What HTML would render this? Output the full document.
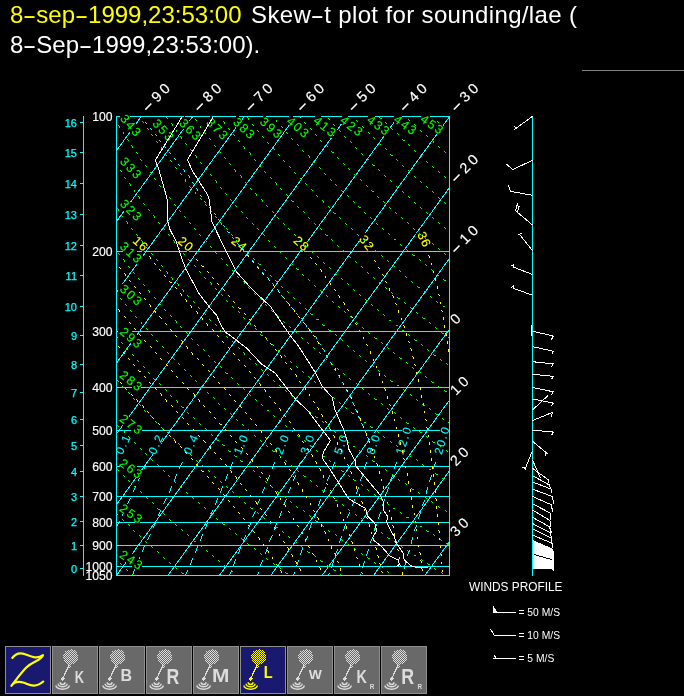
<!DOCTYPE html>
<html><head><meta charset="utf-8"><title>Skew-t plot</title>
<style>
html,body{margin:0;padding:0;background:#000;}
body{width:684px;height:696px;position:relative;overflow:hidden;font-family:"Liberation Sans",Arial,sans-serif;}
.t{will-change:transform;position:absolute;left:10px;white-space:nowrap;font-size:24px;line-height:30px;color:#fff;}
.t .y{color:#ffff00;}
.h{display:inline-block;width:13px;text-align:center;transform:scaleX(1.7);}
</style></head><body>
<div class="t" style="top:0px"><span class="y">8<span class="h">-</span>sep<span class="h">-</span>1999,23:53:00</span><span style="letter-spacing:0.36px;margin-left:2.5px"> Skew<span class="h">-</span>t plot for sounding/lae (</span></div>
<div class="t" style="top:30px">8<span class="h">-</span>Sep<span class="h">-</span>1999,23:53:00).</div>
<svg width="684" height="696" viewBox="0 0 684 696" style="position:absolute;left:0;top:0;will-change:transform" font-family="Liberation Sans, Arial, sans-serif" shape-rendering="crispEdges">
<defs><clipPath id="cb"><rect x="116.5" y="116.5" width="333.0" height="459.0"/></clipPath></defs>
<g clip-path="url(#cb)">
<line x1="116.5" y1="251.5" x2="449.5" y2="251.5" stroke="#00ffff" stroke-width="1" />
<line x1="116.5" y1="331.5" x2="449.5" y2="331.5" stroke="#00ffff" stroke-width="1" />
<line x1="116.5" y1="387.5" x2="449.5" y2="387.5" stroke="#00ffff" stroke-width="1" />
<line x1="116.5" y1="430.5" x2="449.5" y2="430.5" stroke="#00ffff" stroke-width="1" />
<line x1="116.5" y1="466.5" x2="449.5" y2="466.5" stroke="#00ffff" stroke-width="1" />
<line x1="116.5" y1="496.5" x2="449.5" y2="496.5" stroke="#00ffff" stroke-width="1" />
<line x1="116.5" y1="522.5" x2="449.5" y2="522.5" stroke="#00ffff" stroke-width="1" />
<line x1="116.5" y1="545.5" x2="449.5" y2="545.5" stroke="#00ffff" stroke-width="1" />
<line x1="116.5" y1="566.5" x2="449.5" y2="566.5" stroke="#00ffff" stroke-width="1" />
<line x1="-243.3" y1="575.5" x2="89.9" y2="116.5" stroke="#00ffff" stroke-width="1" />
<line x1="-191.9" y1="575.5" x2="141.3" y2="116.5" stroke="#00ffff" stroke-width="1" />
<line x1="-140.5" y1="575.5" x2="192.7" y2="116.5" stroke="#00ffff" stroke-width="1" />
<line x1="-89.1" y1="575.5" x2="244.1" y2="116.5" stroke="#00ffff" stroke-width="1" />
<line x1="-37.7" y1="575.5" x2="295.5" y2="116.5" stroke="#00ffff" stroke-width="1" />
<line x1="13.7" y1="575.5" x2="346.9" y2="116.5" stroke="#00ffff" stroke-width="1" />
<line x1="65.1" y1="575.5" x2="398.3" y2="116.5" stroke="#00ffff" stroke-width="1" />
<line x1="116.5" y1="575.5" x2="449.7" y2="116.5" stroke="#00ffff" stroke-width="1" />
<line x1="167.9" y1="575.5" x2="501.1" y2="116.5" stroke="#00ffff" stroke-width="1" />
<line x1="219.3" y1="575.5" x2="552.5" y2="116.5" stroke="#00ffff" stroke-width="1" />
<line x1="270.7" y1="575.5" x2="603.9" y2="116.5" stroke="#00ffff" stroke-width="1" />
<line x1="322.1" y1="575.5" x2="655.3" y2="116.5" stroke="#00ffff" stroke-width="1" />
<line x1="373.5" y1="575.5" x2="706.7" y2="116.5" stroke="#00ffff" stroke-width="1" />
<line x1="424.9" y1="575.5" x2="758.1" y2="116.5" stroke="#00ffff" stroke-width="1" />
<line x1="476.3" y1="575.5" x2="809.5" y2="116.5" stroke="#00ffff" stroke-width="1" />
<path fill="#00ffff" d="M146 462h1v1h-1zM182 462h1v1h-1zM232 462h1v1h-1zM274 462h1v1h-1zM300 462h1v1h-1zM334 462h1v1h-1zM366 462h1v1h-1zM396 462h1v1h-1zM435 462h1v1h-1zM146 463h1v1h-1zM181 463h1v1h-1zM232 463h1v1h-1zM274 463h1v1h-1zM299 463h1v1h-1zM334 463h1v1h-1zM366 463h1v1h-1zM396 463h1v1h-1zM435 463h1v1h-1zM145 464h1v1h-1zM181 464h1v1h-1zM231 464h1v1h-1zM273 464h1v1h-1zM299 464h1v1h-1zM333 464h1v1h-1zM365 464h1v1h-1zM395 464h1v1h-1zM434 464h1v1h-1zM145 465h1v1h-1zM180 465h1v1h-1zM231 465h1v1h-1zM273 465h1v1h-1zM298 465h1v1h-1zM333 465h1v1h-1zM365 465h1v1h-1zM395 465h1v1h-1zM434 465h1v1h-1zM145 466h1v1h-1zM180 466h1v1h-1zM231 466h1v1h-1zM273 466h1v1h-1zM298 466h1v1h-1zM333 466h1v1h-1zM365 466h1v1h-1zM395 466h1v1h-1zM434 466h1v1h-1zM144 467h1v1h-1zM179 467h1v1h-1zM230 467h1v1h-1zM272 467h1v1h-1zM297 467h1v1h-1zM332 467h1v1h-1zM364 467h1v1h-1zM394 467h1v1h-1zM433 467h1v1h-1zM144 468h1v1h-1zM179 468h1v1h-1zM230 468h1v1h-1zM272 468h1v1h-1zM297 468h1v1h-1zM332 468h1v1h-1zM364 468h1v1h-1zM394 468h1v1h-1zM433 468h1v1h-1zM141 474h1v1h-1zM176 474h1v1h-1zM227 474h1v1h-1zM140 475h1v1h-1zM176 475h1v1h-1zM227 475h1v1h-1zM269 475h1v1h-1zM295 475h1v1h-1zM329 475h1v1h-1zM362 475h1v1h-1zM392 475h1v1h-1zM431 475h1v1h-1zM140 476h1v1h-1zM175 476h1v1h-1zM226 476h1v1h-1zM269 476h1v1h-1zM295 476h1v1h-1zM329 476h1v1h-1zM362 476h1v1h-1zM392 476h1v1h-1zM431 476h1v1h-1zM139 477h1v1h-1zM175 477h1v1h-1zM226 477h1v1h-1zM268 477h1v1h-1zM294 477h1v1h-1zM328 477h1v1h-1zM361 477h1v1h-1zM391 477h1v1h-1zM430 477h1v1h-1zM139 478h1v1h-1zM175 478h1v1h-1zM226 478h1v1h-1zM268 478h1v1h-1zM294 478h1v1h-1zM328 478h1v1h-1zM361 478h1v1h-1zM391 478h1v1h-1zM430 478h1v1h-1zM138 479h1v1h-1zM174 479h1v1h-1zM225 479h1v1h-1zM267 479h1v1h-1zM293 479h1v1h-1zM327 479h1v1h-1zM360 479h1v1h-1zM390 479h1v1h-1zM430 479h1v1h-1zM138 480h1v1h-1zM174 480h1v1h-1zM225 480h1v1h-1zM267 480h1v1h-1zM293 480h1v1h-1zM327 480h1v1h-1zM360 480h1v1h-1zM390 480h1v1h-1zM429 480h1v1h-1zM429 481h1v1h-1zM135 486h1v1h-1zM171 486h1v1h-1zM222 486h1v1h-1zM135 487h1v1h-1zM171 487h1v1h-1zM222 487h1v1h-1zM264 487h1v1h-1zM290 487h1v1h-1zM325 487h1v1h-1zM358 487h1v1h-1zM388 487h1v1h-1zM427 487h1v1h-1zM134 488h1v1h-1zM170 488h1v1h-1zM221 488h1v1h-1zM264 488h1v1h-1zM290 488h1v1h-1zM325 488h1v1h-1zM358 488h1v1h-1zM388 488h1v1h-1zM427 488h1v1h-1zM134 489h1v1h-1zM170 489h1v1h-1zM221 489h1v1h-1zM263 489h1v1h-1zM289 489h1v1h-1zM324 489h1v1h-1zM357 489h1v1h-1zM387 489h1v1h-1zM427 489h1v1h-1zM133 490h1v1h-1zM170 490h1v1h-1zM221 490h1v1h-1zM263 490h1v1h-1zM289 490h1v1h-1zM324 490h1v1h-1zM357 490h1v1h-1zM387 490h1v1h-1zM426 490h1v1h-1zM133 491h1v1h-1zM169 491h1v1h-1zM220 491h1v1h-1zM262 491h1v1h-1zM288 491h1v1h-1zM323 491h1v1h-1zM357 491h1v1h-1zM387 491h1v1h-1zM426 491h1v1h-1zM169 492h1v1h-1zM220 492h1v1h-1zM262 492h1v1h-1zM288 492h1v1h-1zM323 492h1v1h-1zM356 492h1v1h-1zM386 492h1v1h-1zM426 492h1v1h-1zM356 493h1v1h-1zM386 493h1v1h-1zM426 493h1v1h-1zM130 498h1v1h-1zM166 498h1v1h-1zM217 498h1v1h-1zM129 499h1v1h-1zM165 499h1v1h-1zM217 499h1v1h-1zM259 499h1v1h-1zM286 499h1v1h-1zM320 499h1v1h-1zM354 499h1v1h-1zM384 499h1v1h-1zM129 500h1v1h-1zM165 500h1v1h-1zM216 500h1v1h-1zM259 500h1v1h-1zM285 500h1v1h-1zM320 500h1v1h-1zM354 500h1v1h-1zM384 500h1v1h-1zM424 500h1v1h-1zM128 501h1v1h-1zM164 501h1v1h-1zM216 501h1v1h-1zM258 501h1v1h-1zM285 501h1v1h-1zM319 501h1v1h-1zM353 501h1v1h-1zM383 501h1v1h-1zM424 501h1v1h-1zM128 502h1v1h-1zM164 502h1v1h-1zM216 502h1v1h-1zM258 502h1v1h-1zM284 502h1v1h-1zM319 502h1v1h-1zM353 502h1v1h-1zM383 502h1v1h-1zM423 502h1v1h-1zM127 503h1v1h-1zM163 503h1v1h-1zM215 503h1v1h-1zM257 503h1v1h-1zM284 503h1v1h-1zM319 503h1v1h-1zM353 503h1v1h-1zM383 503h1v1h-1zM423 503h1v1h-1zM215 504h1v1h-1zM257 504h1v1h-1zM283 504h1v1h-1zM318 504h1v1h-1zM352 504h1v1h-1zM382 504h1v1h-1zM422 504h1v1h-1zM318 505h1v1h-1zM352 505h1v1h-1zM382 505h1v1h-1zM422 505h1v1h-1zM124 510h1v1h-1zM160 510h1v1h-1zM212 510h1v1h-1zM124 511h1v1h-1zM160 511h1v1h-1zM212 511h1v1h-1zM255 511h1v1h-1zM281 511h1v1h-1zM316 511h1v1h-1zM123 512h1v1h-1zM159 512h1v1h-1zM211 512h1v1h-1zM254 512h1v1h-1zM281 512h1v1h-1zM316 512h1v1h-1zM349 512h1v1h-1zM380 512h1v1h-1zM420 512h1v1h-1zM123 513h1v1h-1zM159 513h1v1h-1zM211 513h1v1h-1zM254 513h1v1h-1zM280 513h1v1h-1zM315 513h1v1h-1zM349 513h1v1h-1zM380 513h1v1h-1zM420 513h1v1h-1zM122 514h1v1h-1zM158 514h1v1h-1zM211 514h1v1h-1zM253 514h1v1h-1zM280 514h1v1h-1zM315 514h1v1h-1zM348 514h1v1h-1zM379 514h1v1h-1zM419 514h1v1h-1zM122 515h1v1h-1zM158 515h1v1h-1zM210 515h1v1h-1zM253 515h1v1h-1zM280 515h1v1h-1zM315 515h1v1h-1zM348 515h1v1h-1zM379 515h1v1h-1zM419 515h1v1h-1zM210 516h1v1h-1zM252 516h1v1h-1zM279 516h1v1h-1zM314 516h1v1h-1zM347 516h1v1h-1zM379 516h1v1h-1zM419 516h1v1h-1zM279 517h1v1h-1zM314 517h1v1h-1zM347 517h1v1h-1zM378 517h1v1h-1zM418 517h1v1h-1zM378 518h1v1h-1zM418 518h1v1h-1zM119 521h1v1h-1zM118 522h1v1h-1zM155 522h1v1h-1zM207 522h1v1h-1zM118 523h1v1h-1zM155 523h1v1h-1zM207 523h1v1h-1zM250 523h1v1h-1zM276 523h1v1h-1zM311 523h1v1h-1zM117 524h1v1h-1zM154 524h1v1h-1zM206 524h1v1h-1zM250 524h1v1h-1zM276 524h1v1h-1zM311 524h1v1h-1zM345 524h1v1h-1zM376 524h1v1h-1zM117 525h1v1h-1zM154 525h1v1h-1zM206 525h1v1h-1zM249 525h1v1h-1zM275 525h1v1h-1zM310 525h1v1h-1zM345 525h1v1h-1zM376 525h1v1h-1zM416 525h1v1h-1zM153 526h1v1h-1zM206 526h1v1h-1zM249 526h1v1h-1zM275 526h1v1h-1zM310 526h1v1h-1zM344 526h1v1h-1zM375 526h1v1h-1zM416 526h1v1h-1zM153 527h1v1h-1zM205 527h1v1h-1zM248 527h1v1h-1zM275 527h1v1h-1zM310 527h1v1h-1zM344 527h1v1h-1zM375 527h1v1h-1zM415 527h1v1h-1zM205 528h1v1h-1zM248 528h1v1h-1zM274 528h1v1h-1zM309 528h1v1h-1zM344 528h1v1h-1zM375 528h1v1h-1zM415 528h1v1h-1zM274 529h1v1h-1zM309 529h1v1h-1zM343 529h1v1h-1zM374 529h1v1h-1zM414 529h1v1h-1zM343 530h1v1h-1zM374 530h1v1h-1zM414 530h1v1h-1zM150 534h1v1h-1zM202 534h1v1h-1zM149 535h1v1h-1zM202 535h1v1h-1zM245 535h1v1h-1zM272 535h1v1h-1zM149 536h1v1h-1zM201 536h1v1h-1zM245 536h1v1h-1zM271 536h1v1h-1zM307 536h1v1h-1zM341 536h1v1h-1zM148 537h1v1h-1zM201 537h1v1h-1zM244 537h1v1h-1zM271 537h1v1h-1zM307 537h1v1h-1zM341 537h1v1h-1zM372 537h1v1h-1zM412 537h1v1h-1zM148 538h1v1h-1zM201 538h1v1h-1zM244 538h1v1h-1zM270 538h1v1h-1zM306 538h1v1h-1zM340 538h1v1h-1zM372 538h1v1h-1zM412 538h1v1h-1zM147 539h1v1h-1zM200 539h1v1h-1zM243 539h1v1h-1zM270 539h1v1h-1zM306 539h1v1h-1zM340 539h1v1h-1zM371 539h1v1h-1zM412 539h1v1h-1zM200 540h1v1h-1zM243 540h1v1h-1zM269 540h1v1h-1zM305 540h1v1h-1zM340 540h1v1h-1zM371 540h1v1h-1zM411 540h1v1h-1zM269 541h1v1h-1zM305 541h1v1h-1zM339 541h1v1h-1zM370 541h1v1h-1zM411 541h1v1h-1zM339 542h1v1h-1zM370 542h1v1h-1zM411 542h1v1h-1zM411 543h1v1h-1zM144 545h1v1h-1zM144 546h1v1h-1zM197 546h1v1h-1zM143 547h1v1h-1zM197 547h1v1h-1zM240 547h1v1h-1zM267 547h1v1h-1zM143 548h1v1h-1zM196 548h1v1h-1zM240 548h1v1h-1zM267 548h1v1h-1zM302 548h1v1h-1zM143 549h1v1h-1zM196 549h1v1h-1zM239 549h1v1h-1zM266 549h1v1h-1zM302 549h1v1h-1zM337 549h1v1h-1zM368 549h1v1h-1zM142 550h1v1h-1zM196 550h1v1h-1zM239 550h1v1h-1zM266 550h1v1h-1zM301 550h1v1h-1zM337 550h1v1h-1zM368 550h1v1h-1zM409 550h1v1h-1zM142 551h1v1h-1zM195 551h1v1h-1zM239 551h1v1h-1zM266 551h1v1h-1zM301 551h1v1h-1zM336 551h1v1h-1zM367 551h1v1h-1zM409 551h1v1h-1zM195 552h1v1h-1zM238 552h1v1h-1zM265 552h1v1h-1zM301 552h1v1h-1zM336 552h1v1h-1zM367 552h1v1h-1zM408 552h1v1h-1zM238 553h1v1h-1zM265 553h1v1h-1zM300 553h1v1h-1zM335 553h1v1h-1zM367 553h1v1h-1zM408 553h1v1h-1zM300 554h1v1h-1zM335 554h1v1h-1zM366 554h1v1h-1zM407 554h1v1h-1zM366 555h1v1h-1zM407 555h1v1h-1zM139 557h1v1h-1zM139 558h1v1h-1zM192 558h1v1h-1zM138 559h1v1h-1zM192 559h1v1h-1zM235 559h1v1h-1zM138 560h1v1h-1zM191 560h1v1h-1zM235 560h1v1h-1zM262 560h1v1h-1zM298 560h1v1h-1zM138 561h1v1h-1zM191 561h1v1h-1zM234 561h1v1h-1zM262 561h1v1h-1zM298 561h1v1h-1zM333 561h1v1h-1zM364 561h1v1h-1zM137 562h1v1h-1zM191 562h1v1h-1zM234 562h1v1h-1zM261 562h1v1h-1zM297 562h1v1h-1zM333 562h1v1h-1zM364 562h1v1h-1zM405 562h1v1h-1zM137 563h1v1h-1zM190 563h1v1h-1zM234 563h1v1h-1zM261 563h1v1h-1zM297 563h1v1h-1zM332 563h1v1h-1zM363 563h1v1h-1zM405 563h1v1h-1zM190 564h1v1h-1zM233 564h1v1h-1zM260 564h1v1h-1zM297 564h1v1h-1zM332 564h1v1h-1zM363 564h1v1h-1zM405 564h1v1h-1zM233 565h1v1h-1zM260 565h1v1h-1zM296 565h1v1h-1zM332 565h1v1h-1zM363 565h1v1h-1zM404 565h1v1h-1zM296 566h1v1h-1zM331 566h1v1h-1zM362 566h1v1h-1zM404 566h1v1h-1zM331 567h1v1h-1zM362 567h1v1h-1zM404 567h1v1h-1zM404 568h1v1h-1zM134 569h1v1h-1zM134 570h1v1h-1zM187 570h1v1h-1zM133 571h1v1h-1zM187 571h1v1h-1zM231 571h1v1h-1zM133 572h1v1h-1zM186 572h1v1h-1zM230 572h1v1h-1zM258 572h1v1h-1zM294 572h1v1h-1zM133 573h1v1h-1zM186 573h1v1h-1zM230 573h1v1h-1zM258 573h1v1h-1zM294 573h1v1h-1zM329 573h1v1h-1zM132 574h1v1h-1zM185 574h1v1h-1zM229 574h1v1h-1zM257 574h1v1h-1zM293 574h1v1h-1zM328 574h1v1h-1zM360 574h1v1h-1z"/>
<g transform="translate(122.3 455.2) rotate(-64.3)"><rect x="-0.5" y="-8.9" width="21.2" height="9.4" fill="#000"/><text x="0.0" y="0.0" fill="#00ffff" stroke="#00ffff" stroke-width="0.12" font-size="11.6" letter-spacing="1.7" text-anchor="start">0.1</text></g>
<g transform="translate(155.3 455.2) rotate(-65.0)"><rect x="-0.5" y="-8.9" width="21.2" height="9.4" fill="#000"/><text x="0.0" y="0.0" fill="#00ffff" stroke="#00ffff" stroke-width="0.12" font-size="11.6" letter-spacing="1.7" text-anchor="start">0.2</text></g>
<g transform="translate(190.5 455.2) rotate(-65.9)"><rect x="-0.5" y="-8.9" width="21.2" height="9.4" fill="#000"/><text x="0.0" y="0.0" fill="#00ffff" stroke="#00ffff" stroke-width="0.12" font-size="11.6" letter-spacing="1.7" text-anchor="start">0.4</text></g>
<g transform="translate(240.8 455.2) rotate(-67.2)"><rect x="-0.5" y="-8.9" width="21.2" height="9.4" fill="#000"/><text x="0.0" y="0.0" fill="#00ffff" stroke="#00ffff" stroke-width="0.12" font-size="11.6" letter-spacing="1.7" text-anchor="start">1.0</text></g>
<g transform="translate(282.0 455.2) rotate(-68.4)"><rect x="-0.5" y="-8.9" width="21.2" height="9.4" fill="#000"/><text x="0.0" y="0.0" fill="#00ffff" stroke="#00ffff" stroke-width="0.12" font-size="11.6" letter-spacing="1.7" text-anchor="start">2.0</text></g>
<g transform="translate(307.5 455.2) rotate(-69.1)"><rect x="-0.5" y="-8.9" width="21.2" height="9.4" fill="#000"/><text x="0.0" y="0.0" fill="#00ffff" stroke="#00ffff" stroke-width="0.12" font-size="11.6" letter-spacing="1.7" text-anchor="start">3.0</text></g>
<g transform="translate(341.2 455.2) rotate(-70.1)"><rect x="-0.5" y="-8.9" width="21.2" height="9.4" fill="#000"/><text x="0.0" y="0.0" fill="#00ffff" stroke="#00ffff" stroke-width="0.12" font-size="11.6" letter-spacing="1.7" text-anchor="start">5.0</text></g>
<g transform="translate(373.7 455.2) rotate(-71.1)"><rect x="-0.5" y="-8.9" width="21.2" height="9.4" fill="#000"/><text x="0.0" y="0.0" fill="#00ffff" stroke="#00ffff" stroke-width="0.12" font-size="11.6" letter-spacing="1.7" text-anchor="start">8.0</text></g>
<g transform="translate(403.1 455.2) rotate(-72.1)"><rect x="-0.5" y="-8.9" width="29.4" height="9.4" fill="#000"/><text x="0.0" y="0.0" fill="#00ffff" stroke="#00ffff" stroke-width="0.12" font-size="11.6" letter-spacing="1.7" text-anchor="start">12.0</text></g>
<g transform="translate(441.7 455.2) rotate(-73.4)"><rect x="-0.5" y="-8.9" width="29.4" height="9.4" fill="#000"/><text x="0.0" y="0.0" fill="#00ffff" stroke="#00ffff" stroke-width="0.12" font-size="11.6" letter-spacing="1.7" text-anchor="start">20.0</text></g>
<path fill="#ffff00" d="M247 255h1v1h-1zM428 255h1v1h-1zM149 256h1v1h-1zM248 256h1v1h-1zM429 256h1v1h-1zM150 257h1v1h-1zM310 257h1v1h-1zM429 257h1v1h-1zM150 258h1v1h-1zM311 258h1v1h-1zM196 259h1v1h-1zM197 260h1v1h-1zM374 260h1v1h-1zM252 261h1v1h-1zM375 261h1v1h-1zM253 262h1v1h-1zM154 263h1v1h-1zM315 263h1v1h-1zM431 263h1v1h-1zM155 264h1v1h-1zM316 264h1v1h-1zM431 264h1v1h-1zM201 265h1v1h-1zM202 266h2v1h-2zM119 267h1v1h-1zM257 267h1v1h-1zM378 267h1v1h-1zM120 268h1v1h-1zM258 268h1v1h-1zM379 268h1v1h-1zM159 269h1v1h-1zM320 269h1v1h-1zM160 270h1v1h-1zM321 270h1v1h-1zM207 271h1v1h-1zM321 271h1v1h-1zM433 271h1v1h-1zM208 272h1v1h-1zM433 272h1v1h-1zM124 273h1v1h-1zM262 273h1v1h-1zM125 274h1v1h-1zM263 274h1v1h-1zM382 274h1v1h-1zM125 275h1v1h-1zM164 275h1v1h-1zM383 275h1v1h-1zM165 276h1v1h-1zM325 276h1v1h-1zM212 277h1v1h-1zM325 277h1v1h-1zM213 278h1v1h-1zM435 278h1v1h-1zM268 279h1v1h-1zM435 279h1v1h-1zM129 280h1v1h-1zM269 280h1v1h-1zM435 280h1v1h-1zM130 281h1v1h-1zM169 281h1v1h-1zM385 281h1v1h-1zM170 282h2v1h-2zM329 282h1v1h-1zM386 282h1v1h-1zM217 283h1v1h-1zM330 283h1v1h-1zM218 284h1v1h-1zM330 284h1v1h-1zM273 285h1v1h-1zM134 286h1v1h-1zM274 286h1v1h-1zM437 286h1v1h-1zM135 287h1v1h-1zM175 287h1v1h-1zM437 287h1v1h-1zM176 288h1v1h-1zM389 288h1v1h-1zM437 288h1v1h-1zM223 289h1v1h-1zM334 289h1v1h-1zM389 289h1v1h-1zM224 290h1v1h-1zM335 290h1v1h-1zM389 290h1v1h-1zM278 291h1v1h-1zM139 292h1v1h-1zM279 292h1v1h-1zM140 293h1v1h-1zM180 293h1v1h-1zM181 294h1v1h-1zM438 294h1v1h-1zM181 295h1v1h-1zM228 295h1v1h-1zM338 295h1v1h-1zM392 295h1v1h-1zM439 295h1v1h-1zM229 296h1v1h-1zM339 296h1v1h-1zM393 296h1v1h-1zM283 297h1v1h-1zM339 297h1v1h-1zM393 297h1v1h-1zM144 298h1v1h-1zM284 298h1v1h-1zM145 299h1v1h-1zM185 299h1v1h-1zM186 300h1v1h-1zM186 301h1v1h-1zM233 301h1v1h-1zM234 302h1v1h-1zM343 302h1v1h-1zM440 302h1v1h-1zM288 303h1v1h-1zM344 303h1v1h-1zM395 303h1v1h-1zM440 303h1v1h-1zM149 304h1v1h-1zM289 304h1v1h-1zM344 304h1v1h-1zM396 304h1v1h-1zM150 305h1v1h-1zM190 305h1v1h-1zM289 305h1v1h-1zM150 306h1v1h-1zM191 306h1v1h-1zM191 307h1v1h-1zM238 307h1v1h-1zM239 308h2v1h-2zM118 309h1v1h-1zM293 309h1v1h-1zM347 309h1v1h-1zM119 310h1v1h-1zM154 310h1v1h-1zM294 310h1v1h-1zM348 310h1v1h-1zM398 310h1v1h-1zM441 310h1v1h-1zM119 311h1v1h-1zM155 311h1v1h-1zM196 311h1v1h-1zM294 311h1v1h-1zM398 311h1v1h-1zM442 311h1v1h-1zM155 312h1v1h-1zM197 312h1v1h-1zM398 312h1v1h-1zM197 313h1v1h-1zM244 313h1v1h-1zM245 314h1v1h-1zM124 316h1v1h-1zM159 316h1v1h-1zM298 316h1v1h-1zM351 316h1v1h-1zM125 317h1v1h-1zM160 317h1v1h-1zM201 317h1v1h-1zM299 317h1v1h-1zM352 317h1v1h-1zM443 317h1v1h-1zM161 318h1v1h-1zM202 318h1v1h-1zM401 318h1v1h-1zM443 318h1v1h-1zM202 319h1v1h-1zM249 319h1v1h-1zM401 319h1v1h-1zM443 319h1v1h-1zM250 320h1v1h-1zM129 322h1v1h-1zM303 322h1v1h-1zM130 323h1v1h-1zM165 323h1v1h-1zM206 323h1v1h-1zM304 323h1v1h-1zM355 323h1v1h-1zM166 324h1v1h-1zM207 324h1v1h-1zM356 324h1v1h-1zM207 325h1v1h-1zM254 325h1v1h-1zM403 325h1v1h-1zM444 325h1v1h-1zM255 326h1v1h-1zM404 326h1v1h-1zM444 326h1v1h-1zM404 327h1v1h-1zM444 327h1v1h-1zM134 328h1v1h-1zM308 328h1v1h-1zM135 329h1v1h-1zM170 329h1v1h-1zM212 329h1v1h-1zM309 329h1v1h-1zM171 330h1v1h-1zM213 330h1v1h-1zM309 330h1v1h-1zM359 330h1v1h-1zM260 331h1v1h-1zM360 331h1v1h-1zM261 332h1v1h-1zM406 333h1v1h-1zM445 333h1v1h-1zM139 334h1v1h-1zM406 334h1v1h-1zM446 334h1v1h-1zM140 335h1v1h-1zM175 335h1v1h-1zM217 335h1v1h-1zM313 335h1v1h-1zM406 335h1v1h-1zM446 335h1v1h-1zM176 336h1v1h-1zM218 336h1v1h-1zM314 336h1v1h-1zM265 337h1v1h-1zM363 337h1v1h-1zM266 338h1v1h-1zM363 338h1v1h-1zM144 340h1v1h-1zM181 340h1v1h-1zM145 341h1v1h-1zM182 341h1v1h-1zM222 341h1v1h-1zM317 341h1v1h-1zM408 341h1v1h-1zM447 341h1v1h-1zM182 342h1v1h-1zM223 342h1v1h-1zM318 342h1v1h-1zM409 342h1v1h-1zM447 342h1v1h-1zM270 343h1v1h-1zM318 343h1v1h-1zM447 343h1v1h-1zM271 344h1v1h-1zM366 344h1v1h-1zM367 345h1v1h-1zM118 346h1v1h-1zM150 346h1v1h-1zM186 346h1v1h-1zM119 347h1v1h-1zM151 347h1v1h-1zM187 347h1v1h-1zM228 347h1v1h-1zM187 348h1v1h-1zM229 348h1v1h-1zM322 348h1v1h-1zM410 348h1v1h-1zM275 349h1v1h-1zM323 349h1v1h-1zM411 349h1v1h-1zM448 349h1v1h-1zM276 350h1v1h-1zM411 350h1v1h-1zM448 350h1v1h-1zM370 351h1v1h-1zM448 351h1v1h-1zM123 352h1v1h-1zM155 352h1v1h-1zM191 352h1v1h-1zM370 352h1v1h-1zM124 353h1v1h-1zM156 353h1v1h-1zM192 353h1v1h-1zM233 353h1v1h-1zM370 353h1v1h-1zM192 354h1v1h-1zM234 354h1v1h-1zM280 355h1v1h-1zM326 355h1v1h-1zM281 356h1v1h-1zM327 356h1v1h-1zM412 356h1v1h-1zM281 357h1v1h-1zM413 357h1v1h-1zM128 358h1v1h-1zM160 358h1v1h-1zM197 358h1v1h-1zM413 358h1v1h-1zM129 359h1v1h-1zM161 359h1v1h-1zM198 359h1v1h-1zM238 359h1v1h-1zM373 359h1v1h-1zM239 360h1v1h-1zM373 360h1v1h-1zM285 362h1v1h-1zM330 362h1v1h-1zM286 363h1v1h-1zM331 363h1v1h-1zM133 364h1v1h-1zM166 364h1v1h-1zM202 364h1v1h-1zM414 364h1v1h-1zM134 365h1v1h-1zM167 365h1v1h-1zM203 365h1v1h-1zM244 365h1v1h-1zM415 365h1v1h-1zM245 366h1v1h-1zM376 366h1v1h-1zM376 367h1v1h-1zM290 368h1v1h-1zM335 368h1v1h-1zM291 369h1v1h-1zM335 369h1v1h-1zM138 370h1v1h-1zM171 370h1v1h-1zM208 370h1v1h-1zM335 370h1v1h-1zM139 371h2v1h-2zM172 371h1v1h-1zM209 371h1v1h-1zM249 371h1v1h-1zM250 372h1v1h-1zM416 372h1v1h-1zM379 373h1v1h-1zM416 373h1v1h-1zM295 374h1v1h-1zM379 374h1v1h-1zM296 375h1v1h-1zM339 375h1v1h-1zM379 375h1v1h-1zM144 376h1v1h-1zM176 376h1v1h-1zM213 376h1v1h-1zM296 376h1v1h-1zM339 376h1v1h-1zM145 377h1v1h-1zM177 377h1v1h-1zM214 377h1v1h-1zM254 377h1v1h-1zM339 377h1v1h-1zM255 378h1v1h-1zM418 379h1v1h-1zM418 380h1v1h-1zM299 381h1v1h-1zM382 381h1v1h-1zM418 381h1v1h-1zM120 382h1v1h-1zM149 382h1v1h-1zM182 382h1v1h-1zM218 382h1v1h-1zM300 382h1v1h-1zM342 382h1v1h-1zM382 382h1v1h-1zM121 383h1v1h-1zM150 383h1v1h-1zM183 383h1v1h-1zM219 383h1v1h-1zM259 383h1v1h-1zM343 383h1v1h-1zM260 384h1v1h-1zM343 384h1v1h-1zM260 385h1v1h-1zM304 387h1v1h-1zM420 387h1v1h-1zM125 388h1v1h-1zM155 388h1v1h-1zM187 388h1v1h-1zM224 388h1v1h-1zM305 388h1v1h-1zM384 388h1v1h-1zM420 388h1v1h-1zM126 389h1v1h-1zM156 389h1v1h-1zM188 389h1v1h-1zM225 389h1v1h-1zM264 389h1v1h-1zM305 389h1v1h-1zM346 389h1v1h-1zM385 389h1v1h-1zM420 389h1v1h-1zM265 390h1v1h-1zM347 390h1v1h-1zM385 390h1v1h-1zM265 391h1v1h-1zM347 391h1v1h-1zM160 393h1v1h-1zM193 393h1v1h-1zM131 394h1v1h-1zM161 394h1v1h-1zM194 394h1v1h-1zM229 394h1v1h-1zM309 394h1v1h-1zM132 395h1v1h-1zM161 395h1v1h-1zM194 395h1v1h-1zM230 395h1v1h-1zM309 395h1v1h-1zM421 395h1v1h-1zM269 396h1v1h-1zM350 396h1v1h-1zM387 396h1v1h-1zM421 396h1v1h-1zM270 397h1v1h-1zM351 397h1v1h-1zM387 397h1v1h-1zM421 397h1v1h-1zM351 398h1v1h-1zM387 398h1v1h-1zM136 399h1v1h-1zM165 399h1v1h-1zM198 399h1v1h-1zM137 400h1v1h-1zM166 400h1v1h-1zM199 400h1v1h-1zM234 400h1v1h-1zM137 401h1v1h-1zM166 401h1v1h-1zM199 401h1v1h-1zM235 401h1v1h-1zM313 401h1v1h-1zM274 402h1v1h-1zM314 402h1v1h-1zM275 403h1v1h-1zM423 403h1v1h-1zM353 404h1v1h-1zM389 404h1v1h-1zM423 404h1v1h-1zM142 405h1v1h-1zM171 405h1v1h-1zM203 405h1v1h-1zM354 405h1v1h-1zM390 405h1v1h-1zM423 405h1v1h-1zM143 406h1v1h-1zM172 406h1v1h-1zM204 406h1v1h-1zM240 406h1v1h-1zM143 407h1v1h-1zM241 407h1v1h-1zM317 407h1v1h-1zM279 408h1v1h-1zM318 408h1v1h-1zM280 409h1v1h-1zM318 409h1v1h-1zM280 410h1v1h-1zM147 411h1v1h-1zM176 411h1v1h-1zM209 411h1v1h-1zM357 411h1v1h-1zM392 411h1v1h-1zM424 411h1v1h-1zM148 412h1v1h-1zM177 412h1v1h-1zM210 412h1v1h-1zM245 412h1v1h-1zM357 412h1v1h-1zM392 412h1v1h-1zM424 412h1v1h-1zM246 413h1v1h-1zM392 413h1v1h-1zM321 414h1v1h-1zM284 415h1v1h-1zM322 415h1v1h-1zM285 416h1v1h-1zM322 416h1v1h-1zM152 417h1v1h-1zM182 417h1v1h-1zM214 417h1v1h-1zM153 418h1v1h-1zM183 418h1v1h-1zM215 418h1v1h-1zM250 418h1v1h-1zM360 418h1v1h-1zM251 419h1v1h-1zM360 419h1v1h-1zM394 419h1v1h-1zM425 419h1v1h-1zM360 420h1v1h-1zM394 420h1v1h-1zM426 420h1v1h-1zM289 421h1v1h-1zM325 421h1v1h-1zM290 422h1v1h-1zM326 422h1v1h-1zM158 423h1v1h-1zM187 423h1v1h-1zM219 423h1v1h-1zM159 424h1v1h-1zM188 424h1v1h-1zM220 424h2v1h-2zM255 424h1v1h-1zM256 425h1v1h-1zM363 426h1v1h-1zM363 427h1v1h-1zM396 427h1v1h-1zM426 427h1v1h-1zM293 428h1v1h-1zM329 428h1v1h-1zM396 428h1v1h-1zM427 428h1v1h-1zM163 429h1v1h-1zM193 429h1v1h-1zM225 429h1v1h-1zM294 429h1v1h-1zM330 429h1v1h-1zM164 430h1v1h-1zM194 430h1v1h-1zM226 430h1v1h-1zM260 430h1v1h-1zM261 431h1v1h-1zM261 432h1v1h-1zM366 433h1v1h-1zM298 434h1v1h-1zM366 434h1v1h-1zM398 434h1v1h-1zM169 435h1v1h-1zM198 435h1v1h-1zM230 435h1v1h-1zM299 435h1v1h-1zM333 435h1v1h-1zM366 435h1v1h-1zM398 435h1v1h-1zM428 435h1v1h-1zM170 436h1v1h-1zM199 436h1v1h-1zM231 436h1v1h-1zM299 436h1v1h-1zM334 436h1v1h-1zM398 436h1v1h-1zM428 436h1v1h-1zM265 437h1v1h-1zM334 437h1v1h-1zM266 438h1v1h-1zM174 440h1v1h-1zM203 440h1v1h-1zM175 441h1v1h-1zM204 441h1v1h-1zM235 441h1v1h-1zM302 441h1v1h-1zM369 441h1v1h-1zM175 442h1v1h-1zM205 442h1v1h-1zM236 442h1v1h-1zM303 442h1v1h-1zM337 442h1v1h-1zM369 442h1v1h-1zM400 442h1v1h-1zM429 442h1v1h-1zM270 443h1v1h-1zM337 443h1v1h-1zM400 443h1v1h-1zM429 443h1v1h-1zM271 444h1v1h-1zM337 444h1v1h-1zM400 444h1v1h-1zM429 444h1v1h-1zM180 446h1v1h-1zM209 446h1v1h-1zM181 447h1v1h-1zM210 447h1v1h-1zM241 447h1v1h-1zM210 448h1v1h-1zM242 448h1v1h-1zM307 448h1v1h-1zM371 448h1v1h-1zM275 449h1v1h-1zM308 449h1v1h-1zM340 449h1v1h-1zM372 449h1v1h-1zM276 450h1v1h-1zM341 450h1v1h-1zM372 450h1v1h-1zM402 450h1v1h-1zM430 450h1v1h-1zM276 451h1v1h-1zM341 451h1v1h-1zM402 451h1v1h-1zM430 451h1v1h-1zM185 452h1v1h-1zM214 452h1v1h-1zM402 452h1v1h-1zM430 452h1v1h-1zM186 453h1v1h-1zM215 453h1v1h-1zM246 453h1v1h-1zM247 454h1v1h-1zM311 454h1v1h-1zM312 455h1v1h-1zM280 456h1v1h-1zM312 456h1v1h-1zM374 456h1v1h-1zM280 457h1v1h-1zM344 457h1v1h-1zM374 457h1v1h-1zM191 458h1v1h-1zM220 458h1v1h-1zM344 458h1v1h-1zM403 458h1v1h-1zM431 458h1v1h-1zM192 459h1v1h-1zM221 459h1v1h-1zM251 459h1v1h-1zM404 459h1v1h-1zM431 459h1v1h-1zM252 460h1v1h-1zM431 460h1v1h-1zM252 461h1v1h-1zM315 461h1v1h-1zM284 462h1v1h-1zM316 462h1v1h-1zM285 463h1v1h-1zM316 463h1v1h-1zM376 463h1v1h-1zM196 464h1v1h-1zM225 464h1v1h-1zM285 464h1v1h-1zM347 464h1v1h-1zM377 464h1v1h-1zM197 465h1v1h-1zM226 465h1v1h-1zM348 465h1v1h-1zM377 465h1v1h-1zM256 466h1v1h-1zM405 466h1v1h-1zM432 466h1v1h-1zM257 467h1v1h-1zM405 467h1v1h-1zM432 467h1v1h-1zM319 468h1v1h-1zM432 468h1v1h-1zM289 469h1v1h-1zM320 469h1v1h-1zM201 470h1v1h-1zM230 470h1v1h-1zM290 470h1v1h-1zM320 470h1v1h-1zM202 471h2v1h-2zM231 471h1v1h-1zM350 471h1v1h-1zM379 471h1v1h-1zM231 472h1v1h-1zM261 472h1v1h-1zM351 472h1v1h-1zM379 472h1v1h-1zM262 473h1v1h-1zM351 473h1v1h-1zM379 473h1v1h-1zM407 473h1v1h-1zM407 474h1v1h-1zM433 474h1v1h-1zM323 475h1v1h-1zM407 475h1v1h-1zM433 475h1v1h-1zM207 476h1v1h-1zM235 476h1v1h-1zM293 476h1v1h-1zM323 476h1v1h-1zM433 476h1v1h-1zM208 477h1v1h-1zM236 477h1v1h-1zM294 477h1v1h-1zM323 477h1v1h-1zM236 478h1v1h-1zM266 478h1v1h-1zM267 479h1v1h-1zM353 479h1v1h-1zM381 479h1v1h-1zM267 480h1v1h-1zM354 480h1v1h-1zM381 480h1v1h-1zM408 481h1v1h-1zM212 482h1v1h-1zM297 482h1v1h-1zM408 482h1v1h-1zM434 482h1v1h-1zM213 483h1v1h-1zM240 483h1v1h-1zM298 483h1v1h-1zM326 483h1v1h-1zM408 483h1v1h-1zM434 483h1v1h-1zM241 484h1v1h-1zM298 484h1v1h-1zM327 484h1v1h-1zM434 484h1v1h-1zM270 485h1v1h-1zM271 486h1v1h-1zM356 486h1v1h-1zM383 486h1v1h-1zM356 487h1v1h-1zM383 487h1v1h-1zM218 488h1v1h-1zM356 488h1v1h-1zM383 488h1v1h-1zM219 489h1v1h-1zM245 489h1v1h-1zM302 489h1v1h-1zM410 489h1v1h-1zM246 490h1v1h-1zM302 490h1v1h-1zM330 490h1v1h-1zM410 490h1v1h-1zM435 490h1v1h-1zM275 491h1v1h-1zM302 491h1v1h-1zM331 491h1v1h-1zM410 491h1v1h-1zM435 491h1v1h-1zM276 492h1v1h-1zM435 492h1v1h-1zM276 493h1v1h-1zM223 494h1v1h-1zM359 494h1v1h-1zM385 494h1v1h-1zM224 495h1v1h-1zM250 495h1v1h-1zM359 495h1v1h-1zM385 495h1v1h-1zM251 496h1v1h-1zM306 496h1v1h-1zM385 496h1v1h-1zM306 497h1v1h-1zM333 497h1v1h-1zM411 497h1v1h-1zM280 498h1v1h-1zM334 498h1v1h-1zM411 498h1v1h-1zM435 498h1v1h-1zM280 499h1v1h-1zM411 499h1v1h-1zM436 499h1v1h-1zM228 500h1v1h-1zM436 500h1v1h-1zM229 501h1v1h-1zM255 501h1v1h-1zM361 501h1v1h-1zM256 502h1v1h-1zM362 502h1v1h-1zM387 502h1v1h-1zM256 503h1v1h-1zM310 503h1v1h-1zM362 503h1v1h-1zM387 503h1v1h-1zM284 504h1v1h-1zM310 504h1v1h-1zM337 504h1v1h-1zM285 505h1v1h-1zM337 505h1v1h-1zM412 505h1v1h-1zM233 506h1v1h-1zM285 506h1v1h-1zM337 506h1v1h-1zM412 506h1v1h-1zM436 506h1v1h-1zM234 507h1v1h-1zM412 507h1v1h-1zM436 507h1v1h-1zM260 508h1v1h-1zM436 508h1v1h-1zM261 509h1v1h-1zM364 509h1v1h-1zM313 510h1v1h-1zM364 510h1v1h-1zM389 510h1v1h-1zM288 511h1v1h-1zM314 511h1v1h-1zM389 511h1v1h-1zM238 512h1v1h-1zM289 512h1v1h-1zM340 512h1v1h-1zM239 513h1v1h-1zM340 513h1v1h-1zM414 513h1v1h-1zM265 514h1v1h-1zM414 514h1v1h-1zM437 514h1v1h-1zM266 515h1v1h-1zM437 515h1v1h-1zM437 516h1v1h-1zM317 517h1v1h-1zM366 517h1v1h-1zM391 517h1v1h-1zM243 518h1v1h-1zM293 518h1v1h-1zM318 518h1v1h-1zM367 518h1v1h-1zM391 518h1v1h-1zM244 519h1v1h-1zM293 519h1v1h-1zM318 519h1v1h-1zM343 519h1v1h-1zM391 519h1v1h-1zM343 520h1v1h-1zM270 521h1v1h-1zM415 521h1v1h-1zM271 522h1v1h-1zM415 522h1v1h-1zM438 522h1v1h-1zM438 523h1v1h-1zM321 524h1v1h-1zM369 524h1v1h-1zM438 524h1v1h-1zM248 525h1v1h-1zM297 525h1v1h-1zM321 525h1v1h-1zM369 525h1v1h-1zM392 525h1v1h-1zM249 526h1v1h-1zM298 526h1v1h-1zM321 526h1v1h-1zM346 526h1v1h-1zM369 526h1v1h-1zM393 526h1v1h-1zM274 527h1v1h-1zM346 527h1v1h-1zM393 527h1v1h-1zM275 528h1v1h-1zM346 528h1v1h-1zM416 529h1v1h-1zM416 530h1v1h-1zM438 530h1v1h-1zM253 531h1v1h-1zM324 531h1v1h-1zM439 531h1v1h-1zM254 532h1v1h-1zM301 532h1v1h-1zM325 532h1v1h-1zM371 532h1v1h-1zM439 532h1v1h-1zM302 533h1v1h-1zM325 533h1v1h-1zM371 533h1v1h-1zM394 533h1v1h-1zM279 534h1v1h-1zM349 534h1v1h-1zM394 534h1v1h-1zM279 535h1v1h-1zM349 535h1v1h-1zM394 535h1v1h-1zM258 537h1v1h-1zM417 537h1v1h-1zM259 538h1v1h-1zM417 538h1v1h-1zM439 538h1v1h-1zM259 539h1v1h-1zM305 539h1v1h-1zM328 539h1v1h-1zM439 539h1v1h-1zM305 540h1v1h-1zM328 540h1v1h-1zM373 540h1v1h-1zM283 541h1v1h-1zM351 541h1v1h-1zM374 541h1v1h-1zM396 541h1v1h-1zM284 542h1v1h-1zM352 542h1v1h-1zM396 542h1v1h-1zM352 543h1v1h-1zM396 543h1v1h-1zM263 544h1v1h-1zM263 545h1v1h-1zM418 545h1v1h-1zM308 546h1v1h-1zM331 546h1v1h-1zM418 546h1v1h-1zM440 546h1v1h-1zM287 547h1v1h-1zM309 547h1v1h-1zM331 547h1v1h-1zM375 547h1v1h-1zM440 547h1v1h-1zM288 548h1v1h-1zM331 548h1v1h-1zM376 548h1v1h-1zM288 549h1v1h-1zM354 549h1v1h-1zM376 549h1v1h-1zM397 549h1v1h-1zM267 550h1v1h-1zM354 550h1v1h-1zM398 550h1v1h-1zM268 551h1v1h-1zM268 552h1v1h-1zM419 552h1v1h-1zM312 553h1v1h-1zM334 553h1v1h-1zM420 553h1v1h-1zM291 554h1v1h-1zM313 554h1v1h-1zM335 554h1v1h-1zM420 554h1v1h-1zM441 554h1v1h-1zM292 555h1v1h-1zM335 555h1v1h-1zM377 555h1v1h-1zM441 555h1v1h-1zM292 556h1v1h-1zM378 556h1v1h-1zM272 557h1v1h-1zM356 557h1v1h-1zM378 557h1v1h-1zM399 557h1v1h-1zM272 558h1v1h-1zM357 558h1v1h-1zM399 558h1v1h-1zM316 560h1v1h-1zM420 560h1v1h-1zM295 561h1v1h-1zM316 561h1v1h-1zM337 561h1v1h-1zM421 561h1v1h-1zM296 562h1v1h-1zM338 562h1v1h-1zM421 562h1v1h-1zM441 562h1v1h-1zM296 563h1v1h-1zM379 563h1v1h-1zM441 563h1v1h-1zM276 564h1v1h-1zM359 564h1v1h-1zM380 564h1v1h-1zM277 565h1v1h-1zM359 565h1v1h-1zM400 565h1v1h-1zM359 566h1v1h-1zM401 566h1v1h-1zM319 567h1v1h-1zM299 568h1v1h-1zM320 568h1v1h-1zM340 568h1v1h-1zM421 568h1v1h-1zM300 569h1v1h-1zM320 569h1v1h-1zM340 569h1v1h-1zM422 569h1v1h-1zM280 570h1v1h-1zM300 570h1v1h-1zM340 570h1v1h-1zM422 570h1v1h-1zM442 570h1v1h-1zM281 571h1v1h-1zM381 571h1v1h-1zM442 571h1v1h-1zM281 572h1v1h-1zM361 572h1v1h-1zM382 572h1v1h-1zM402 572h1v1h-1zM362 573h1v1h-1zM402 573h1v1h-1zM402 574h1v1h-1z"/>
<g transform="translate(140.6 243.5) rotate(41.8)"><rect x="-8.7" y="-5.0" width="16.3" height="10.0" fill="#000"/><text x="0.6" y="4.5" fill="#ffff00" stroke="#ffff00" stroke-width="0.12" font-size="12.5" letter-spacing="1.2" text-anchor="middle">16</text></g>
<g transform="translate(185.6 243.7) rotate(40.3)"><rect x="-8.7" y="-5.0" width="16.3" height="10.0" fill="#000"/><text x="0.6" y="4.5" fill="#ffff00" stroke="#ffff00" stroke-width="0.12" font-size="12.5" letter-spacing="1.2" text-anchor="middle">20</text></g>
<g transform="translate(239.2 243.7) rotate(40.0)"><rect x="-8.7" y="-5.0" width="16.3" height="10.0" fill="#000"/><text x="0.6" y="4.5" fill="#ffff00" stroke="#ffff00" stroke-width="0.12" font-size="12.5" letter-spacing="1.2" text-anchor="middle">24</text></g>
<g transform="translate(301.4 243.3) rotate(43.1)"><rect x="-8.7" y="-5.0" width="16.3" height="10.0" fill="#000"/><text x="0.6" y="4.5" fill="#ffff00" stroke="#ffff00" stroke-width="0.12" font-size="12.5" letter-spacing="1.2" text-anchor="middle">28</text></g>
<g transform="translate(366.8 242.4) rotate(52.3)"><rect x="-8.7" y="-5.0" width="16.3" height="10.0" fill="#000"/><text x="0.6" y="4.5" fill="#ffff00" stroke="#ffff00" stroke-width="0.12" font-size="12.5" letter-spacing="1.2" text-anchor="middle">32</text></g>
<g transform="translate(424.3 239.1) rotate(65.0)"><rect x="-8.7" y="-5.0" width="16.3" height="10.0" fill="#000"/><text x="0.6" y="4.5" fill="#ffff00" stroke="#ffff00" stroke-width="0.12" font-size="12.5" letter-spacing="1.2" text-anchor="middle">36</text></g>
<path fill="#00ff00" d="M166 117h1v1h-1zM247 117h1v1h-1zM300 117h1v1h-1zM379 117h1v1h-1zM167 118h1v1h-1zM248 118h1v1h-1zM328 118h1v1h-1zM380 118h2v1h-2zM195 119h1v1h-1zM248 119h1v1h-1zM329 119h1v1h-1zM408 119h1v1h-1zM196 120h1v1h-1zM276 120h1v1h-1zM356 120h1v1h-1zM409 120h1v1h-1zM142 121h1v1h-1zM223 121h1v1h-1zM276 121h1v1h-1zM357 121h1v1h-1zM437 121h1v1h-1zM143 122h1v1h-1zM224 122h1v1h-1zM304 122h1v1h-1zM385 122h1v1h-1zM438 122h1v1h-1zM171 123h1v1h-1zM224 123h1v1h-1zM305 123h1v1h-1zM386 123h1v1h-1zM172 124h1v1h-1zM252 124h1v1h-1zM333 124h1v1h-1zM414 124h1v1h-1zM118 125h1v1h-1zM172 125h1v1h-1zM253 125h1v1h-1zM334 125h1v1h-1zM415 125h1v1h-1zM119 126h1v1h-1zM200 126h1v1h-1zM281 126h1v1h-1zM362 126h1v1h-1zM443 126h1v1h-1zM119 127h1v1h-1zM200 127h1v1h-1zM282 127h1v1h-1zM363 127h1v1h-1zM444 127h1v1h-1zM147 128h1v1h-1zM228 128h1v1h-1zM310 128h1v1h-1zM391 128h1v1h-1zM148 129h1v1h-1zM229 129h1v1h-1zM311 129h1v1h-1zM392 129h1v1h-1zM176 130h1v1h-1zM257 130h1v1h-1zM339 130h1v1h-1zM420 130h1v1h-1zM176 131h1v1h-1zM258 131h1v1h-1zM340 131h1v1h-1zM421 131h1v1h-1zM123 132h1v1h-1zM204 132h1v1h-1zM286 132h1v1h-1zM368 132h1v1h-1zM123 133h1v1h-1zM205 133h1v1h-1zM287 133h1v1h-1zM369 133h1v1h-1zM397 133h1v1h-1zM151 134h1v1h-1zM233 134h1v1h-1zM315 134h1v1h-1zM398 134h1v1h-1zM152 135h1v1h-1zM234 135h1v1h-1zM316 135h1v1h-1zM426 135h1v1h-1zM180 136h1v1h-1zM262 136h1v1h-1zM344 136h1v1h-1zM427 136h1v1h-1zM181 137h1v1h-1zM263 137h1v1h-1zM345 137h1v1h-1zM373 137h1v1h-1zM181 138h1v1h-1zM209 138h1v1h-1zM291 138h1v1h-1zM374 138h1v1h-1zM127 139h1v1h-1zM210 139h1v1h-1zM292 139h1v1h-1zM402 139h1v1h-1zM128 140h1v1h-1zM238 140h1v1h-1zM320 140h1v1h-1zM403 140h2v1h-2zM432 140h1v1h-1zM156 141h1v1h-1zM239 141h1v1h-1zM321 141h1v1h-1zM350 141h1v1h-1zM433 141h1v1h-1zM157 142h1v1h-1zM267 142h1v1h-1zM351 142h1v1h-1zM433 142h1v1h-1zM185 143h1v1h-1zM268 143h1v1h-1zM379 143h1v1h-1zM186 144h1v1h-1zM297 144h1v1h-1zM380 144h1v1h-1zM408 144h1v1h-1zM131 145h1v1h-1zM214 145h1v1h-1zM298 145h1v1h-1zM326 145h1v1h-1zM409 145h1v1h-1zM132 146h1v1h-1zM215 146h1v1h-1zM243 146h1v1h-1zM327 146h1v1h-1zM438 146h1v1h-1zM132 147h1v1h-1zM161 147h1v1h-1zM244 147h1v1h-1zM355 147h1v1h-1zM439 147h1v1h-1zM161 148h1v1h-1zM244 148h1v1h-1zM273 148h1v1h-1zM356 148h1v1h-1zM385 148h1v1h-1zM161 149h1v1h-1zM190 149h1v1h-1zM274 149h1v1h-1zM386 149h1v1h-1zM191 150h1v1h-1zM302 150h1v1h-1zM414 150h1v1h-1zM219 151h1v1h-1zM303 151h1v1h-1zM331 151h1v1h-1zM415 151h1v1h-1zM444 151h1v1h-1zM136 152h1v1h-1zM220 152h1v1h-1zM249 152h1v1h-1zM332 152h2v1h-2zM445 152h1v1h-1zM137 153h1v1h-1zM250 153h1v1h-1zM361 153h1v1h-1zM165 154h1v1h-1zM250 154h1v1h-1zM278 154h1v1h-1zM362 154h1v1h-1zM390 154h1v1h-1zM166 155h1v1h-1zM195 155h1v1h-1zM279 155h1v1h-1zM308 155h1v1h-1zM391 155h2v1h-2zM420 155h1v1h-1zM196 156h1v1h-1zM309 156h1v1h-1zM421 156h1v1h-1zM196 157h1v1h-1zM224 157h1v1h-1zM309 157h1v1h-1zM337 157h1v1h-1zM225 158h1v1h-1zM338 158h1v1h-1zM367 158h1v1h-1zM140 159h1v1h-1zM254 159h1v1h-1zM368 159h1v1h-1zM396 159h1v1h-1zM141 160h1v1h-1zM170 160h1v1h-1zM255 160h1v1h-1zM283 160h1v1h-1zM397 160h1v1h-1zM171 161h1v1h-1zM284 161h1v1h-1zM313 161h1v1h-1zM426 161h1v1h-1zM200 162h1v1h-1zM314 162h1v1h-1zM427 162h1v1h-1zM201 163h1v1h-1zM229 163h1v1h-1zM343 163h1v1h-1zM230 164h1v1h-1zM344 164h1v1h-1zM372 164h1v1h-1zM145 165h1v1h-1zM259 165h1v1h-1zM373 165h2v1h-2zM402 165h1v1h-1zM146 166h1v1h-1zM260 166h1v1h-1zM289 166h1v1h-1zM403 166h1v1h-1zM432 166h1v1h-1zM175 167h1v1h-1zM290 167h1v1h-1zM319 167h1v1h-1zM433 167h1v1h-1zM176 168h1v1h-1zM205 168h1v1h-1zM320 168h1v1h-1zM348 168h1v1h-1zM206 169h1v1h-1zM234 169h1v1h-1zM349 169h1v1h-1zM378 169h1v1h-1zM120 170h1v1h-1zM235 170h1v1h-1zM379 170h1v1h-1zM408 170h1v1h-1zM121 171h1v1h-1zM235 171h1v1h-1zM264 171h1v1h-1zM409 171h1v1h-1zM438 171h1v1h-1zM150 172h1v1h-1zM265 172h1v1h-1zM294 172h1v1h-1zM439 172h1v1h-1zM151 173h1v1h-1zM180 173h1v1h-1zM295 173h1v1h-1zM324 173h1v1h-1zM181 174h1v1h-1zM210 174h1v1h-1zM325 174h1v1h-1zM354 174h1v1h-1zM211 175h1v1h-1zM240 175h1v1h-1zM355 175h1v1h-1zM384 175h1v1h-1zM241 176h1v1h-1zM385 176h1v1h-1zM414 176h1v1h-1zM444 176h1v1h-1zM124 177h1v1h-1zM241 177h1v1h-1zM270 177h1v1h-1zM415 177h1v1h-1zM445 177h1v1h-1zM125 178h1v1h-1zM154 178h1v1h-1zM271 178h1v1h-1zM300 178h1v1h-1zM155 179h1v1h-1zM185 179h1v1h-1zM301 179h1v1h-1zM330 179h1v1h-1zM360 179h1v1h-1zM185 180h1v1h-1zM215 180h1v1h-1zM331 180h1v1h-1zM361 180h1v1h-1zM390 180h1v1h-1zM185 181h1v1h-1zM216 181h1v1h-1zM391 181h1v1h-1zM420 181h1v1h-1zM216 182h1v1h-1zM245 182h1v1h-1zM275 182h1v1h-1zM421 182h1v1h-1zM129 183h1v1h-1zM246 183h1v1h-1zM276 183h1v1h-1zM305 183h1v1h-1zM130 184h1v1h-1zM276 184h1v1h-1zM306 184h1v1h-1zM335 184h1v1h-1zM130 185h1v1h-1zM159 185h1v1h-1zM336 185h1v1h-1zM366 185h1v1h-1zM160 186h1v1h-1zM189 186h1v1h-1zM367 186h1v1h-1zM396 186h1v1h-1zM426 186h1v1h-1zM190 187h1v1h-1zM220 187h1v1h-1zM397 187h1v1h-1zM427 187h1v1h-1zM221 188h1v1h-1zM250 188h1v1h-1zM280 188h1v1h-1zM251 189h1v1h-1zM281 189h1v1h-1zM311 189h1v1h-1zM134 190h1v1h-1zM312 190h1v1h-1zM341 190h1v1h-1zM371 190h1v1h-1zM134 191h1v1h-1zM164 191h1v1h-1zM342 191h1v1h-1zM372 191h2v1h-2zM402 191h1v1h-1zM432 191h1v1h-1zM165 192h1v1h-1zM195 192h1v1h-1zM403 192h1v1h-1zM433 192h1v1h-1zM195 193h1v1h-1zM225 193h1v1h-1zM255 193h1v1h-1zM226 194h1v1h-1zM256 194h1v1h-1zM286 194h1v1h-1zM256 195h1v1h-1zM287 195h1v1h-1zM316 195h1v1h-1zM347 195h1v1h-1zM138 196h1v1h-1zM317 196h1v1h-1zM348 196h1v1h-1zM377 196h1v1h-1zM408 196h1v1h-1zM139 197h1v1h-1zM169 197h1v1h-1zM378 197h1v1h-1zM409 197h1v1h-1zM438 197h1v1h-1zM139 198h1v1h-1zM170 198h1v1h-1zM200 198h1v1h-1zM439 198h1v1h-1zM201 199h1v1h-1zM230 199h1v1h-1zM261 199h1v1h-1zM231 200h1v1h-1zM262 200h1v1h-1zM291 200h1v1h-1zM322 200h1v1h-1zM262 201h1v1h-1zM292 201h2v1h-2zM323 201h1v1h-1zM353 201h1v1h-1zM383 201h1v1h-1zM323 202h1v1h-1zM354 202h1v1h-1zM384 202h1v1h-1zM414 202h1v1h-1zM444 202h1v1h-1zM143 203h1v1h-1zM415 203h1v1h-1zM445 203h1v1h-1zM144 204h1v1h-1zM174 204h1v1h-1zM205 204h1v1h-1zM175 205h1v1h-1zM206 205h1v1h-1zM235 205h1v1h-1zM266 205h1v1h-1zM236 206h1v1h-1zM267 206h1v1h-1zM297 206h1v1h-1zM328 206h1v1h-1zM358 206h1v1h-1zM298 207h1v1h-1zM329 207h1v1h-1zM359 207h2v1h-2zM389 207h1v1h-1zM420 207h1v1h-1zM117 208h1v1h-1zM390 208h1v1h-1zM421 208h1v1h-1zM118 209h1v1h-1zM148 209h1v1h-1zM118 210h1v1h-1zM149 210h1v1h-1zM179 210h1v1h-1zM210 210h1v1h-1zM180 211h1v1h-1zM211 211h1v1h-1zM241 211h1v1h-1zM272 211h1v1h-1zM303 211h1v1h-1zM242 212h1v1h-1zM273 212h1v1h-1zM304 212h1v1h-1zM333 212h1v1h-1zM364 212h1v1h-1zM395 212h1v1h-1zM426 212h1v1h-1zM334 213h2v1h-2zM365 213h1v1h-1zM396 213h1v1h-1zM427 213h1v1h-1zM121 215h1v1h-1zM153 215h1v1h-1zM122 216h1v1h-1zM154 216h1v1h-1zM184 216h1v1h-1zM215 216h1v1h-1zM154 217h1v1h-1zM185 217h1v1h-1zM216 217h1v1h-1zM246 217h1v1h-1zM277 217h1v1h-1zM308 217h1v1h-1zM339 217h1v1h-1zM370 217h1v1h-1zM401 217h1v1h-1zM432 217h1v1h-1zM247 218h1v1h-1zM278 218h1v1h-1zM309 218h1v1h-1zM340 218h1v1h-1zM371 218h1v1h-1zM402 218h1v1h-1zM433 218h1v1h-1zM126 221h1v1h-1zM127 222h1v1h-1zM158 222h1v1h-1zM189 222h1v1h-1zM220 222h1v1h-1zM407 222h1v1h-1zM438 222h1v1h-1zM127 223h1v1h-1zM159 223h1v1h-1zM190 223h1v1h-1zM221 223h1v1h-1zM252 223h1v1h-1zM283 223h1v1h-1zM314 223h1v1h-1zM345 223h1v1h-1zM376 223h1v1h-1zM408 223h1v1h-1zM439 223h1v1h-1zM221 224h1v1h-1zM253 224h1v1h-1zM284 224h1v1h-1zM315 224h1v1h-1zM346 224h1v1h-1zM377 224h1v1h-1zM444 227h1v1h-1zM131 228h1v1h-1zM163 228h1v1h-1zM194 228h1v1h-1zM226 228h1v1h-1zM257 228h1v1h-1zM288 228h1v1h-1zM320 228h1v1h-1zM351 228h1v1h-1zM382 228h1v1h-1zM413 228h1v1h-1zM445 228h1v1h-1zM132 229h1v1h-1zM164 229h1v1h-1zM195 229h1v1h-1zM227 229h1v1h-1zM258 229h1v1h-1zM289 229h1v1h-1zM321 229h1v1h-1zM352 229h1v1h-1zM383 229h1v1h-1zM414 229h1v1h-1zM388 233h1v1h-1zM419 233h1v1h-1zM136 234h1v1h-1zM168 234h1v1h-1zM199 234h1v1h-1zM231 234h1v1h-1zM263 234h1v1h-1zM294 234h1v1h-1zM325 234h1v1h-1zM357 234h1v1h-1zM389 234h1v1h-1zM420 234h1v1h-1zM137 235h1v1h-1zM169 235h1v1h-1zM200 235h1v1h-1zM232 235h1v1h-1zM264 235h1v1h-1zM295 235h1v1h-1zM326 235h2v1h-2zM358 235h1v1h-1zM425 238h1v1h-1zM331 239h1v1h-1zM363 239h1v1h-1zM394 239h2v1h-2zM426 239h2v1h-2zM141 240h1v1h-1zM173 240h1v1h-1zM205 240h1v1h-1zM236 240h1v1h-1zM268 240h1v1h-1zM300 240h1v1h-1zM332 240h1v1h-1zM364 240h1v1h-1zM142 241h1v1h-1zM174 241h1v1h-1zM206 241h1v1h-1zM237 241h1v1h-1zM269 241h1v1h-1zM301 241h1v1h-1zM142 242h1v1h-1zM174 242h1v1h-1zM432 243h1v1h-1zM369 244h1v1h-1zM400 244h1v1h-1zM433 244h1v1h-1zM305 245h1v1h-1zM337 245h1v1h-1zM370 245h1v1h-1zM401 245h1v1h-1zM210 246h1v1h-1zM242 246h1v1h-1zM274 246h1v1h-1zM306 246h2v1h-2zM338 246h1v1h-1zM146 247h1v1h-1zM178 247h1v1h-1zM211 247h1v1h-1zM243 247h1v1h-1zM275 247h1v1h-1zM147 248h1v1h-1zM179 248h1v1h-1zM438 248h1v1h-1zM406 249h1v1h-1zM439 249h1v1h-1zM343 250h1v1h-1zM375 250h1v1h-1zM407 250h1v1h-1zM279 251h1v1h-1zM311 251h1v1h-1zM344 251h1v1h-1zM376 251h1v1h-1zM215 252h1v1h-1zM247 252h1v1h-1zM280 252h1v1h-1zM312 252h1v1h-1zM118 253h1v1h-1zM151 253h1v1h-1zM183 253h1v1h-1zM216 253h1v1h-1zM248 253h1v1h-1zM444 253h1v1h-1zM119 254h1v1h-1zM152 254h1v1h-1zM184 254h1v1h-1zM412 254h1v1h-1zM445 254h1v1h-1zM381 255h1v1h-1zM413 255h2v1h-2zM317 256h1v1h-1zM349 256h1v1h-1zM382 256h1v1h-1zM285 257h1v1h-1zM318 257h1v1h-1zM350 257h1v1h-1zM221 258h1v1h-1zM253 258h1v1h-1zM286 258h1v1h-1zM123 259h1v1h-1zM156 259h1v1h-1zM188 259h1v1h-1zM222 259h1v1h-1zM254 259h1v1h-1zM419 259h1v1h-1zM124 260h1v1h-1zM157 260h1v1h-1zM189 260h1v1h-1zM387 260h1v1h-1zM420 260h1v1h-1zM124 261h1v1h-1zM355 261h1v1h-1zM388 261h1v1h-1zM323 262h1v1h-1zM356 262h1v1h-1zM258 263h1v1h-1zM291 263h1v1h-1zM324 263h1v1h-1zM226 264h1v1h-1zM259 264h2v1h-2zM292 264h1v1h-1zM425 264h1v1h-1zM161 265h1v1h-1zM194 265h1v1h-1zM227 265h1v1h-1zM393 265h1v1h-1zM426 265h1v1h-1zM128 266h1v1h-1zM162 266h1v1h-1zM195 266h1v1h-1zM361 266h1v1h-1zM394 266h1v1h-1zM129 267h1v1h-1zM329 267h1v1h-1zM362 267h1v1h-1zM296 268h1v1h-1zM330 268h1v1h-1zM264 269h1v1h-1zM297 269h2v1h-2zM431 269h1v1h-1zM232 270h1v1h-1zM265 270h1v1h-1zM399 270h1v1h-1zM432 270h1v1h-1zM166 271h1v1h-1zM199 271h1v1h-1zM233 271h1v1h-1zM400 271h1v1h-1zM133 272h1v1h-1zM167 272h1v1h-1zM200 272h1v1h-1zM367 272h1v1h-1zM134 273h1v1h-1zM167 273h1v1h-1zM335 273h1v1h-1zM368 273h1v1h-1zM302 274h1v1h-1zM336 274h1v1h-1zM437 274h1v1h-1zM270 275h1v1h-1zM303 275h1v1h-1zM438 275h1v1h-1zM237 276h1v1h-1zM271 276h1v1h-1zM405 276h1v1h-1zM171 277h1v1h-1zM204 277h1v1h-1zM238 277h1v1h-1zM373 277h1v1h-1zM406 277h1v1h-1zM138 278h1v1h-1zM172 278h1v1h-1zM205 278h1v1h-1zM341 278h1v1h-1zM374 278h1v1h-1zM139 279h1v1h-1zM172 279h1v1h-1zM308 279h1v1h-1zM342 279h1v1h-1zM443 279h1v1h-1zM275 280h1v1h-1zM309 280h1v1h-1zM444 280h2v1h-2zM243 281h1v1h-1zM276 281h2v1h-2zM411 281h1v1h-1zM210 282h1v1h-1zM244 282h1v1h-1zM379 282h1v1h-1zM412 282h1v1h-1zM177 283h1v1h-1zM211 283h1v1h-1zM244 283h1v1h-1zM347 283h1v1h-1zM380 283h1v1h-1zM143 284h1v1h-1zM178 284h1v1h-1zM211 284h1v1h-1zM348 284h1v1h-1zM144 285h1v1h-1zM178 285h1v1h-1zM314 285h1v1h-1zM281 286h1v1h-1zM315 286h1v1h-1zM417 286h1v1h-1zM248 287h1v1h-1zM282 287h1v1h-1zM385 287h1v1h-1zM418 287h2v1h-2zM215 288h1v1h-1zM249 288h1v1h-1zM386 288h1v1h-1zM182 289h1v1h-1zM216 289h1v1h-1zM353 289h1v1h-1zM148 290h1v1h-1zM183 290h1v1h-1zM320 290h1v1h-1zM354 290h1v1h-1zM149 291h1v1h-1zM183 291h1v1h-1zM287 291h1v1h-1zM321 291h1v1h-1zM424 291h1v1h-1zM149 292h1v1h-1zM288 292h1v1h-1zM391 292h1v1h-1zM425 292h1v1h-1zM254 293h1v1h-1zM392 293h1v1h-1zM221 294h1v1h-1zM255 294h1v1h-1zM359 294h1v1h-1zM187 295h1v1h-1zM222 295h1v1h-1zM326 295h1v1h-1zM360 295h1v1h-1zM188 296h1v1h-1zM327 296h1v1h-1zM430 296h1v1h-1zM154 297h1v1h-1zM293 297h1v1h-1zM397 297h1v1h-1zM431 297h1v1h-1zM120 298h1v1h-1zM155 298h1v1h-1zM260 298h1v1h-1zM294 298h1v1h-1zM398 298h2v1h-2zM121 299h1v1h-1zM261 299h1v1h-1zM365 299h1v1h-1zM226 300h1v1h-1zM366 300h1v1h-1zM193 301h1v1h-1zM227 301h1v1h-1zM332 301h1v1h-1zM436 301h1v1h-1zM194 302h1v1h-1zM299 302h1v1h-1zM333 302h1v1h-1zM404 302h1v1h-1zM437 302h1v1h-1zM159 303h1v1h-1zM300 303h1v1h-1zM405 303h1v1h-1zM125 304h1v1h-1zM160 304h1v1h-1zM265 304h1v1h-1zM371 304h1v1h-1zM126 305h1v1h-1zM266 305h1v1h-1zM372 305h1v1h-1zM232 306h1v1h-1zM338 306h1v1h-1zM443 306h2v1h-2zM198 307h1v1h-1zM233 307h1v1h-1zM339 307h1v1h-1zM410 307h1v1h-1zM199 308h1v1h-1zM305 308h1v1h-1zM411 308h1v1h-1zM164 309h1v1h-1zM306 309h1v1h-1zM377 309h1v1h-1zM130 310h1v1h-1zM165 310h1v1h-1zM271 310h1v1h-1zM378 310h1v1h-1zM131 311h1v1h-1zM238 311h1v1h-1zM272 311h1v1h-1zM344 311h1v1h-1zM239 312h1v1h-1zM345 312h1v1h-1zM416 312h1v1h-1zM204 313h1v1h-1zM310 313h1v1h-1zM417 313h1v1h-1zM205 314h1v1h-1zM311 314h2v1h-2zM383 314h1v1h-1zM170 315h1v1h-1zM277 315h1v1h-1zM384 315h1v1h-1zM135 316h1v1h-1zM171 316h1v1h-1zM278 316h1v1h-1zM350 316h1v1h-1zM136 317h1v1h-1zM243 317h1v1h-1zM351 317h1v1h-1zM422 317h1v1h-1zM244 318h1v1h-1zM423 318h2v1h-2zM209 319h1v1h-1zM316 319h3v1h-3zM175 320h1v1h-1zM210 320h1v1h-1zM389 320h2v1h-2zM176 321h1v1h-1zM283 321h1v1h-1zM141 322h1v1h-1zM176 322h1v1h-1zM249 322h1v1h-1zM284 322h1v1h-1zM356 322h1v1h-1zM429 322h1v1h-1zM141 323h1v1h-1zM250 323h1v1h-1zM357 323h1v1h-1zM430 323h1v1h-1zM215 324h1v1h-1zM250 324h1v1h-1zM322 324h1v1h-1zM216 325h1v1h-1zM323 325h2v1h-2zM396 325h2v1h-2zM180 326h1v1h-1zM289 326h1v1h-1zM181 327h1v1h-1zM290 327h1v1h-1zM362 327h1v1h-1zM435 327h1v1h-1zM146 328h1v1h-1zM255 328h1v1h-1zM363 328h1v1h-1zM436 328h1v1h-1zM147 329h1v1h-1zM256 329h1v1h-1zM328 329h1v1h-1zM220 330h1v1h-1zM329 330h2v1h-2zM402 330h2v1h-2zM221 331h1v1h-1zM295 331h1v1h-1zM186 332h1v1h-1zM296 332h1v1h-1zM368 332h1v1h-1zM441 332h1v1h-1zM187 333h1v1h-1zM369 333h1v1h-1zM442 333h2v1h-2zM151 334h1v1h-1zM260 334h1v1h-1zM335 334h1v1h-1zM408 334h1v1h-1zM152 335h1v1h-1zM261 335h2v1h-2zM336 335h1v1h-1zM409 335h1v1h-1zM226 336h1v1h-1zM117 337h1v1h-1zM227 337h1v1h-1zM301 337h1v1h-1zM374 337h1v1h-1zM448 337h1v1h-1zM191 338h1v1h-1zM302 338h1v1h-1zM375 338h2v1h-2zM192 339h1v1h-1zM266 339h1v1h-1zM341 339h1v1h-1zM414 339h1v1h-1zM156 340h1v1h-1zM267 340h1v1h-1zM342 340h1v1h-1zM415 340h2v1h-2zM157 341h1v1h-1zM232 341h1v1h-1zM121 342h1v1h-1zM233 342h1v1h-1zM307 342h1v1h-1zM381 342h1v1h-1zM122 343h1v1h-1zM308 343h1v1h-1zM382 343h1v1h-1zM197 344h1v1h-1zM272 344h1v1h-1zM421 344h1v1h-1zM198 345h1v1h-1zM273 345h1v1h-1zM347 345h1v1h-1zM422 345h1v1h-1zM162 346h1v1h-1zM348 346h1v1h-1zM163 347h1v1h-1zM238 347h1v1h-1zM313 347h1v1h-1zM387 347h1v1h-1zM126 348h1v1h-1zM239 348h1v1h-1zM314 348h1v1h-1zM388 348h1v1h-1zM127 349h1v1h-1zM203 349h1v1h-1zM427 349h1v1h-1zM204 350h1v1h-1zM278 350h1v1h-1zM353 350h1v1h-1zM428 350h1v1h-1zM279 351h1v1h-1zM354 351h1v1h-1zM167 352h1v1h-1zM243 352h1v1h-1zM319 352h1v1h-1zM393 352h1v1h-1zM168 353h1v1h-1zM244 353h1v1h-1zM320 353h1v1h-1zM394 353h1v1h-1zM132 354h1v1h-1zM244 354h1v1h-1zM433 354h1v1h-1zM133 355h1v1h-1zM208 355h1v1h-1zM284 355h1v1h-1zM359 355h1v1h-1zM434 355h2v1h-2zM209 356h1v1h-1zM285 356h1v1h-1zM360 356h1v1h-1zM399 357h1v1h-1zM173 358h1v1h-1zM249 358h1v1h-1zM325 358h1v1h-1zM400 358h2v1h-2zM174 359h1v1h-1zM250 359h1v1h-1zM326 359h1v1h-1zM440 359h1v1h-1zM137 360h1v1h-1zM365 360h1v1h-1zM441 360h1v1h-1zM138 361h1v1h-1zM214 361h1v1h-1zM290 361h1v1h-1zM366 361h1v1h-1zM215 362h1v1h-1zM291 362h1v1h-1zM406 362h1v1h-1zM178 363h1v1h-1zM255 363h1v1h-1zM331 363h1v1h-1zM407 363h1v1h-1zM446 363h1v1h-1zM179 364h1v1h-1zM256 364h1v1h-1zM332 364h1v1h-1zM447 364h1v1h-1zM372 365h1v1h-1zM143 366h1v1h-1zM220 366h1v1h-1zM296 366h1v1h-1zM373 366h1v1h-1zM144 367h1v1h-1zM221 367h1v1h-1zM297 367h1v1h-1zM412 367h1v1h-1zM337 368h1v1h-1zM413 368h1v1h-1zM184 369h1v1h-1zM261 369h1v1h-1zM338 369h1v1h-1zM185 370h1v1h-1zM262 370h1v1h-1zM378 370h1v1h-1zM302 371h1v1h-1zM379 371h1v1h-1zM419 371h1v1h-1zM148 372h1v1h-1zM225 372h1v1h-1zM303 372h1v1h-1zM420 372h1v1h-1zM149 373h1v1h-1zM226 373h2v1h-2zM343 373h1v1h-1zM267 374h1v1h-1zM344 374h1v1h-1zM190 375h1v1h-1zM268 375h1v1h-1zM384 375h1v1h-1zM191 376h1v1h-1zM308 376h1v1h-1zM385 376h1v1h-1zM425 376h1v1h-1zM231 377h1v1h-1zM309 377h1v1h-1zM426 377h1v1h-1zM153 378h1v1h-1zM232 378h1v1h-1zM349 378h1v1h-1zM154 379h1v1h-1zM350 379h1v1h-1zM117 380h1v1h-1zM195 380h1v1h-1zM273 380h1v1h-1zM390 380h1v1h-1zM118 381h1v1h-1zM196 381h1v1h-1zM274 381h1v1h-1zM314 381h1v1h-1zM391 381h2v1h-2zM431 381h1v1h-1zM315 382h1v1h-1zM432 382h2v1h-2zM159 383h1v1h-1zM237 383h1v1h-1zM356 383h1v1h-1zM160 384h1v1h-1zM238 384h1v1h-1zM357 384h1v1h-1zM279 385h1v1h-1zM397 385h2v1h-2zM122 386h1v1h-1zM201 386h1v1h-1zM280 386h1v1h-1zM438 386h1v1h-1zM123 387h1v1h-1zM202 387h1v1h-1zM320 387h1v1h-1zM439 387h1v1h-1zM243 388h1v1h-1zM321 388h1v1h-1zM362 388h1v1h-1zM165 389h1v1h-1zM244 389h1v1h-1zM363 389h1v1h-1zM403 389h1v1h-1zM166 390h1v1h-1zM285 390h1v1h-1zM404 390h1v1h-1zM444 390h1v1h-1zM286 391h1v1h-1zM445 391h2v1h-2zM128 392h1v1h-1zM207 392h1v1h-1zM327 392h1v1h-1zM129 393h1v1h-1zM208 393h1v1h-1zM328 393h1v1h-1zM368 393h1v1h-1zM249 394h1v1h-1zM369 394h1v1h-1zM410 394h1v1h-1zM170 395h1v1h-1zM250 395h1v1h-1zM291 395h1v1h-1zM411 395h1v1h-1zM171 396h1v1h-1zM292 396h1v1h-1zM213 397h1v1h-1zM333 397h1v1h-1zM133 398h1v1h-1zM214 398h1v1h-1zM334 398h1v1h-1zM374 398h1v1h-1zM134 399h1v1h-1zM255 399h1v1h-1zM375 399h2v1h-2zM416 399h1v1h-1zM176 400h1v1h-1zM256 400h1v1h-1zM297 400h1v1h-1zM417 400h1v1h-1zM177 401h1v1h-1zM298 401h1v1h-1zM177 402h1v1h-1zM339 402h1v1h-1zM218 403h1v1h-1zM340 403h1v1h-1zM381 403h1v1h-1zM139 404h1v1h-1zM219 404h1v1h-1zM261 404h1v1h-1zM382 404h1v1h-1zM422 404h1v1h-1zM140 405h1v1h-1zM262 405h1v1h-1zM423 405h2v1h-2zM181 406h1v1h-1zM303 406h1v1h-1zM182 407h2v1h-2zM304 407h1v1h-1zM345 407h1v1h-1zM224 408h1v1h-1zM346 408h1v1h-1zM387 408h1v1h-1zM429 408h1v1h-1zM225 409h1v1h-1zM388 409h1v1h-1zM430 409h1v1h-1zM144 410h1v1h-1zM267 410h2v1h-2zM145 411h1v1h-1zM309 411h1v1h-1zM187 412h1v1h-1zM310 412h1v1h-1zM351 412h1v1h-1zM394 412h1v1h-1zM188 413h1v1h-1zM230 413h1v1h-1zM352 413h2v1h-2zM395 413h1v1h-1zM435 413h1v1h-1zM231 414h1v1h-1zM436 414h2v1h-2zM150 415h1v1h-1zM273 415h1v1h-1zM151 416h1v1h-1zM274 416h1v1h-1zM315 416h1v1h-1zM193 417h1v1h-1zM316 417h2v1h-2zM358 417h1v1h-1zM400 417h1v1h-1zM194 418h1v1h-1zM359 418h1v1h-1zM401 418h1v1h-1zM442 418h1v1h-1zM236 419h1v1h-1zM443 419h1v1h-1zM237 420h1v1h-1zM279 420h1v1h-1zM155 421h1v1h-1zM280 421h1v1h-1zM322 421h1v1h-1zM156 422h1v1h-1zM323 422h1v1h-1zM364 422h2v1h-2zM406 422h1v1h-1zM448 422h1v1h-1zM199 423h1v1h-1zM407 423h2v1h-2zM200 424h1v1h-1zM242 424h1v1h-1zM117 425h1v1h-1zM243 425h1v1h-1zM285 425h1v1h-1zM118 426h1v1h-1zM286 426h1v1h-1zM328 426h1v1h-1zM370 426h1v1h-1zM161 427h1v1h-1zM329 427h1v1h-1zM371 427h2v1h-2zM413 427h1v1h-1zM162 428h1v1h-1zM205 428h1v1h-1zM414 428h1v1h-1zM206 429h1v1h-1zM248 429h1v1h-1zM123 430h1v1h-1zM249 430h1v1h-1zM291 430h1v1h-1zM124 431h1v1h-1zM292 431h1v1h-1zM334 431h1v1h-1zM377 431h1v1h-1zM419 431h1v1h-1zM124 432h1v1h-1zM167 432h1v1h-1zM335 432h1v1h-1zM378 432h1v1h-1zM420 432h2v1h-2zM168 433h1v1h-1zM211 434h1v1h-1zM212 435h1v1h-1zM254 435h1v1h-1zM297 435h1v1h-1zM128 436h1v1h-1zM255 436h1v1h-1zM298 436h2v1h-2zM340 436h1v1h-1zM383 436h1v1h-1zM426 436h1v1h-1zM129 437h1v1h-1zM341 437h2v1h-2zM384 437h1v1h-1zM427 437h1v1h-1zM173 438h1v1h-1zM174 439h1v1h-1zM216 439h1v1h-1zM217 440h2v1h-2zM260 440h1v1h-1zM304 440h1v1h-1zM261 441h1v1h-1zM305 441h1v1h-1zM347 441h1v1h-1zM390 441h1v1h-1zM432 441h1v1h-1zM134 442h1v1h-1zM348 442h1v1h-1zM391 442h1v1h-1zM433 442h2v1h-2zM135 443h1v1h-1zM178 443h1v1h-1zM179 444h1v1h-1zM222 444h1v1h-1zM223 445h2v1h-2zM266 445h1v1h-1zM310 445h1v1h-1zM396 445h1v1h-1zM439 445h1v1h-1zM267 446h1v1h-1zM311 446h1v1h-1zM353 446h2v1h-2zM397 446h1v1h-1zM440 446h1v1h-1zM140 448h1v1h-1zM141 449h1v1h-1zM184 449h1v1h-1zM185 450h1v1h-1zM228 450h1v1h-1zM272 450h1v1h-1zM316 450h1v1h-1zM359 450h1v1h-1zM403 450h1v1h-1zM446 450h1v1h-1zM229 451h2v1h-2zM273 451h2v1h-2zM317 451h1v1h-1zM360 451h2v1h-2zM404 451h1v1h-1zM447 451h1v1h-1zM145 453h1v1h-1zM146 454h1v1h-1zM190 454h1v1h-1zM191 455h1v1h-1zM234 455h1v1h-1zM279 455h1v1h-1zM322 455h1v1h-1zM366 455h1v1h-1zM409 455h1v1h-1zM235 456h2v1h-2zM280 456h1v1h-1zM323 456h2v1h-2zM367 456h1v1h-1zM410 456h1v1h-1zM151 459h1v1h-1zM416 459h1v1h-1zM152 460h1v1h-1zM196 460h1v1h-1zM240 460h1v1h-1zM285 460h1v1h-1zM329 460h1v1h-1zM372 460h1v1h-1zM417 460h1v1h-1zM197 461h1v1h-1zM241 461h2v1h-2zM286 461h1v1h-1zM330 461h1v1h-1zM373 461h2v1h-2zM157 464h1v1h-1zM422 464h1v1h-1zM158 465h1v1h-1zM202 465h1v1h-1zM247 465h1v1h-1zM291 465h1v1h-1zM335 465h1v1h-1zM379 465h1v1h-1zM423 465h1v1h-1zM203 466h1v1h-1zM248 466h1v1h-1zM292 466h1v1h-1zM336 466h1v1h-1zM380 466h1v1h-1zM117 469h1v1h-1zM385 469h1v1h-1zM429 469h2v1h-2zM118 470h1v1h-1zM163 470h1v1h-1zM208 470h1v1h-1zM253 470h1v1h-1zM297 470h1v1h-1zM341 470h1v1h-1zM386 470h1v1h-1zM164 471h1v1h-1zM209 471h1v1h-1zM254 471h1v1h-1zM298 471h1v1h-1zM342 471h2v1h-2zM435 473h1v1h-1zM392 474h1v1h-1zM436 474h2v1h-2zM123 475h1v1h-1zM168 475h1v1h-1zM303 475h1v1h-1zM348 475h1v1h-1zM393 475h1v1h-1zM124 476h1v1h-1zM169 476h1v1h-1zM214 476h1v1h-1zM259 476h1v1h-1zM304 476h2v1h-2zM349 476h1v1h-1zM215 477h1v1h-1zM260 477h1v1h-1zM442 478h2v1h-2zM398 479h1v1h-1zM128 480h1v1h-1zM310 480h1v1h-1zM354 480h2v1h-2zM399 480h1v1h-1zM129 481h1v1h-1zM174 481h1v1h-1zM220 481h1v1h-1zM265 481h1v1h-1zM311 481h1v1h-1zM175 482h1v1h-1zM221 482h1v1h-1zM266 482h1v1h-1zM405 483h1v1h-1zM361 484h1v1h-1zM406 484h1v1h-1zM316 485h1v1h-1zM362 485h1v1h-1zM134 486h1v1h-1zM180 486h1v1h-1zM226 486h1v1h-1zM271 486h1v1h-1zM317 486h1v1h-1zM135 487h1v1h-1zM181 487h1v1h-1zM227 487h1v1h-1zM272 487h1v1h-1zM411 488h1v1h-1zM367 489h1v1h-1zM412 489h2v1h-2zM322 490h1v1h-1zM368 490h1v1h-1zM140 491h1v1h-1zM232 491h1v1h-1zM277 491h1v1h-1zM323 491h2v1h-2zM141 492h1v1h-1zM186 492h1v1h-1zM233 492h1v1h-1zM278 492h2v1h-2zM418 492h1v1h-1zM187 493h1v1h-1zM419 493h1v1h-1zM374 494h1v1h-1zM329 495h1v1h-1zM375 495h1v1h-1zM238 496h1v1h-1zM284 496h1v1h-1zM330 496h1v1h-1zM146 497h1v1h-1zM192 497h1v1h-1zM239 497h1v1h-1zM285 497h1v1h-1zM425 497h1v1h-1zM147 498h1v1h-1zM193 498h1v1h-1zM380 498h1v1h-1zM426 498h1v1h-1zM381 499h1v1h-1zM335 500h2v1h-2zM290 501h1v1h-1zM431 501h1v1h-1zM152 502h1v1h-1zM198 502h1v1h-1zM244 502h1v1h-1zM291 502h1v1h-1zM432 502h1v1h-1zM153 503h1v1h-1zM199 503h1v1h-1zM245 503h1v1h-1zM387 503h1v1h-1zM342 504h1v1h-1zM388 504h1v1h-1zM343 505h1v1h-1zM296 506h1v1h-1zM438 506h1v1h-1zM204 507h1v1h-1zM250 507h1v1h-1zM297 507h1v1h-1zM439 507h1v1h-1zM157 508h1v1h-1zM205 508h1v1h-1zM251 508h2v1h-2zM393 508h2v1h-2zM158 509h2v1h-2zM348 509h1v1h-1zM303 510h1v1h-1zM349 510h1v1h-1zM445 510h1v1h-1zM304 511h1v1h-1zM446 511h1v1h-1zM257 512h1v1h-1zM400 512h1v1h-1zM163 513h1v1h-1zM210 513h1v1h-1zM258 513h1v1h-1zM401 513h1v1h-1zM117 514h1v1h-1zM164 514h1v1h-1zM211 514h1v1h-1zM355 514h1v1h-1zM309 515h1v1h-1zM356 515h1v1h-1zM310 516h1v1h-1zM263 517h1v1h-1zM406 517h3v1h-3zM216 518h1v1h-1zM264 518h1v1h-1zM361 518h1v1h-1zM122 519h1v1h-1zM169 519h1v1h-1zM217 519h1v1h-1zM362 519h1v1h-1zM123 520h1v1h-1zM170 520h1v1h-1zM315 520h1v1h-1zM316 521h2v1h-2zM413 521h1v1h-1zM269 522h1v1h-1zM414 522h1v1h-1zM222 523h1v1h-1zM270 523h1v1h-1zM368 523h1v1h-1zM128 524h1v1h-1zM175 524h1v1h-1zM223 524h2v1h-2zM369 524h1v1h-1zM129 525h1v1h-1zM176 525h1v1h-1zM322 525h1v1h-1zM323 526h1v1h-1zM420 526h2v1h-2zM275 527h3v1h-3zM229 528h1v1h-1zM374 528h1v1h-1zM181 529h1v1h-1zM230 529h1v1h-1zM375 529h1v1h-1zM133 530h1v1h-1zM182 530h1v1h-1zM328 530h1v1h-1zM426 530h1v1h-1zM134 531h1v1h-1zM282 531h1v1h-1zM329 531h1v1h-1zM427 531h2v1h-2zM283 532h1v1h-1zM381 532h1v1h-1zM235 533h1v1h-1zM382 533h1v1h-1zM187 534h1v1h-1zM236 534h1v1h-1zM335 534h1v1h-1zM433 534h1v1h-1zM139 535h1v1h-1zM188 535h1v1h-1zM336 535h1v1h-1zM434 535h1v1h-1zM140 536h1v1h-1zM288 536h1v1h-1zM289 537h1v1h-1zM387 537h1v1h-1zM241 538h1v1h-1zM388 538h2v1h-2zM242 539h1v1h-1zM341 539h1v1h-1zM440 539h1v1h-1zM193 540h1v1h-1zM342 540h1v1h-1zM441 540h1v1h-1zM145 541h1v1h-1zM194 541h2v1h-2zM295 541h1v1h-1zM394 541h1v1h-1zM146 542h1v1h-1zM296 542h1v1h-1zM395 542h1v1h-1zM247 543h1v1h-1zM446 543h1v1h-1zM248 544h1v1h-1zM348 544h1v1h-1zM447 544h2v1h-2zM200 545h1v1h-1zM349 545h1v1h-1zM151 546h1v1h-1zM201 546h1v1h-1zM301 546h1v1h-1zM401 546h1v1h-1zM152 547h1v1h-1zM302 547h1v1h-1zM402 547h1v1h-1zM254 548h1v1h-1zM354 548h1v1h-1zM255 549h1v1h-1zM355 549h1v1h-1zM206 550h1v1h-1zM407 550h1v1h-1zM157 551h1v1h-1zM207 551h1v1h-1zM307 551h1v1h-1zM408 551h1v1h-1zM158 552h1v1h-1zM308 552h2v1h-2zM260 553h1v1h-1zM361 553h1v1h-1zM261 554h1v1h-1zM362 554h1v1h-1zM212 555h1v1h-1zM314 555h1v1h-1zM414 555h2v1h-2zM213 556h1v1h-1zM315 556h1v1h-1zM163 557h1v1h-1zM367 557h1v1h-1zM164 558h1v1h-1zM266 558h1v1h-1zM368 558h2v1h-2zM267 559h1v1h-1zM421 559h1v1h-1zM218 560h1v1h-1zM320 560h1v1h-1zM422 560h1v1h-1zM219 561h1v1h-1zM321 561h2v1h-2zM169 562h1v1h-1zM374 562h1v1h-1zM120 563h1v1h-1zM170 563h1v1h-1zM273 563h1v1h-1zM375 563h1v1h-1zM427 563h1v1h-1zM121 564h1v1h-1zM274 564h1v1h-1zM428 564h2v1h-2zM224 565h1v1h-1zM327 565h1v1h-1zM225 566h1v1h-1zM328 566h1v1h-1zM381 566h1v1h-1zM175 567h1v1h-1zM279 567h1v1h-1zM382 567h1v1h-1zM176 568h1v1h-1zM280 568h1v1h-1zM434 568h1v1h-1zM126 569h1v1h-1zM333 569h1v1h-1zM435 569h1v1h-1zM127 570h1v1h-1zM231 570h1v1h-1zM334 570h2v1h-2zM232 571h1v1h-1zM387 571h1v1h-1zM181 572h1v1h-1zM285 572h1v1h-1zM388 572h1v1h-1zM441 572h1v1h-1zM182 573h2v1h-2zM286 573h2v1h-2zM442 573h1v1h-1zM132 574h1v1h-1zM340 574h1v1h-1z"/>
</g>
<rect x="116.5" y="116.5" width="333.0" height="459.0" fill="none" stroke="#00ffff"/>
<g transform="translate(131.1 559.6) rotate(33.2)"><rect x="-13.5" y="-5.0" width="26.0" height="10.0" fill="#000"/><text x="0.8" y="4.5" fill="#00ff00" stroke="#00ff00" stroke-width="0.12" font-size="12.5" letter-spacing="1.7" text-anchor="middle">243</text></g>
<g transform="translate(131.1 513.5) rotate(34.5)"><rect x="-13.5" y="-5.0" width="26.0" height="10.0" fill="#000"/><text x="0.8" y="4.5" fill="#00ff00" stroke="#00ff00" stroke-width="0.12" font-size="12.5" letter-spacing="1.7" text-anchor="middle">253</text></g>
<g transform="translate(131.1 468.4) rotate(35.9)"><rect x="-13.5" y="-5.0" width="26.0" height="10.0" fill="#000"/><text x="0.8" y="4.5" fill="#00ff00" stroke="#00ff00" stroke-width="0.12" font-size="12.5" letter-spacing="1.7" text-anchor="middle">263</text></g>
<g transform="translate(131.1 424.1) rotate(37.3)"><rect x="-13.5" y="-5.0" width="26.0" height="10.0" fill="#000"/><text x="0.8" y="4.5" fill="#00ff00" stroke="#00ff00" stroke-width="0.12" font-size="12.5" letter-spacing="1.7" text-anchor="middle">273</text></g>
<g transform="translate(131.1 380.5) rotate(38.7)"><rect x="-13.5" y="-5.0" width="26.0" height="10.0" fill="#000"/><text x="0.8" y="4.5" fill="#00ff00" stroke="#00ff00" stroke-width="0.12" font-size="12.5" letter-spacing="1.7" text-anchor="middle">283</text></g>
<g transform="translate(131.1 337.4) rotate(40.2)"><rect x="-13.5" y="-5.0" width="26.0" height="10.0" fill="#000"/><text x="0.8" y="4.5" fill="#00ff00" stroke="#00ff00" stroke-width="0.12" font-size="12.5" letter-spacing="1.7" text-anchor="middle">293</text></g>
<g transform="translate(131.1 294.7) rotate(41.8)"><rect x="-13.5" y="-5.0" width="26.0" height="10.0" fill="#000"/><text x="0.8" y="4.5" fill="#00ff00" stroke="#00ff00" stroke-width="0.12" font-size="12.5" letter-spacing="1.7" text-anchor="middle">303</text></g>
<g transform="translate(131.0 252.3) rotate(43.4)"><rect x="-13.5" y="-5.0" width="26.0" height="10.0" fill="#000"/><text x="0.8" y="4.5" fill="#00ff00" stroke="#00ff00" stroke-width="0.12" font-size="12.5" letter-spacing="1.7" text-anchor="middle">313</text></g>
<g transform="translate(131.0 210.0) rotate(45.0)"><rect x="-13.5" y="-5.0" width="26.0" height="10.0" fill="#000"/><text x="0.8" y="4.5" fill="#00ff00" stroke="#00ff00" stroke-width="0.12" font-size="12.5" letter-spacing="1.7" text-anchor="middle">323</text></g>
<g transform="translate(130.9 167.7) rotate(46.8)"><rect x="-13.5" y="-5.0" width="26.0" height="10.0" fill="#000"/><text x="0.8" y="4.5" fill="#00ff00" stroke="#00ff00" stroke-width="0.12" font-size="12.5" letter-spacing="1.7" text-anchor="middle">333</text></g>
<g transform="translate(130.8 125.2) rotate(48.7)"><rect x="-13.5" y="-5.0" width="26.0" height="10.0" fill="#000"/><text x="0.8" y="4.5" fill="#00ff00" stroke="#00ff00" stroke-width="0.12" font-size="12.5" letter-spacing="1.7" text-anchor="middle">343</text></g>
<g transform="translate(163.3 129.9) rotate(47.5)"><rect x="-13.5" y="-5.0" width="26.0" height="10.0" fill="#000"/><text x="0.8" y="4.5" fill="#00ff00" stroke="#00ff00" stroke-width="0.12" font-size="12.5" letter-spacing="1.7" text-anchor="middle">353</text></g>
<g transform="translate(190.3 129.3) rotate(46.0)"><rect x="-13.5" y="-5.0" width="26.0" height="10.0" fill="#000"/><text x="0.8" y="4.5" fill="#00ff00" stroke="#00ff00" stroke-width="0.12" font-size="12.5" letter-spacing="1.7" text-anchor="middle">363</text></g>
<g transform="translate(217.3 128.6) rotate(44.5)"><rect x="-13.5" y="-5.0" width="26.0" height="10.0" fill="#000"/><text x="0.8" y="4.5" fill="#00ff00" stroke="#00ff00" stroke-width="0.12" font-size="12.5" letter-spacing="1.7" text-anchor="middle">373</text></g>
<g transform="translate(244.2 128.0) rotate(43.1)"><rect x="-13.5" y="-5.0" width="26.0" height="10.0" fill="#000"/><text x="0.8" y="4.5" fill="#00ff00" stroke="#00ff00" stroke-width="0.12" font-size="12.5" letter-spacing="1.7" text-anchor="middle">383</text></g>
<g transform="translate(271.1 127.4) rotate(41.7)"><rect x="-13.5" y="-5.0" width="26.0" height="10.0" fill="#000"/><text x="0.8" y="4.5" fill="#00ff00" stroke="#00ff00" stroke-width="0.12" font-size="12.5" letter-spacing="1.7" text-anchor="middle">393</text></g>
<g transform="translate(297.9 126.9) rotate(40.4)"><rect x="-13.5" y="-5.0" width="26.0" height="10.0" fill="#000"/><text x="0.8" y="4.5" fill="#00ff00" stroke="#00ff00" stroke-width="0.12" font-size="12.5" letter-spacing="1.7" text-anchor="middle">403</text></g>
<g transform="translate(324.8 126.3) rotate(39.1)"><rect x="-13.5" y="-5.0" width="26.0" height="10.0" fill="#000"/><text x="0.8" y="4.5" fill="#00ff00" stroke="#00ff00" stroke-width="0.12" font-size="12.5" letter-spacing="1.7" text-anchor="middle">413</text></g>
<g transform="translate(351.6 125.8) rotate(37.9)"><rect x="-13.5" y="-5.0" width="26.0" height="10.0" fill="#000"/><text x="0.8" y="4.5" fill="#00ff00" stroke="#00ff00" stroke-width="0.12" font-size="12.5" letter-spacing="1.7" text-anchor="middle">423</text></g>
<g transform="translate(378.4 125.2) rotate(36.7)"><rect x="-13.5" y="-5.0" width="26.0" height="10.0" fill="#000"/><text x="0.8" y="4.5" fill="#00ff00" stroke="#00ff00" stroke-width="0.12" font-size="12.5" letter-spacing="1.7" text-anchor="middle">433</text></g>
<g transform="translate(405.2 124.7) rotate(35.6)"><rect x="-13.5" y="-5.0" width="26.0" height="10.0" fill="#000"/><text x="0.8" y="4.5" fill="#00ff00" stroke="#00ff00" stroke-width="0.12" font-size="12.5" letter-spacing="1.7" text-anchor="middle">443</text></g>
<g transform="translate(432.0 124.2) rotate(34.5)"><rect x="-13.5" y="-5.0" width="26.0" height="10.0" fill="#000"/><text x="0.8" y="4.5" fill="#00ff00" stroke="#00ff00" stroke-width="0.12" font-size="12.5" letter-spacing="1.7" text-anchor="middle">453</text></g>
<path fill="#00ffff" d="M145 122h1v1h-1zM146 123h1v1h-1zM150 128h1v1h-1zM151 129h1v1h-1zM155 134h1v1h-1zM156 135h1v1h-1zM159 140h1v1h-1zM160 141h1v1h-1zM164 146h1v1h-1zM165 147h1v1h-1zM169 152h1v1h-1zM170 153h1v1h-1zM174 158h1v1h-1zM175 159h1v1h-1zM178 164h1v1h-1zM179 165h1v1h-1zM183 169h1v1h-1zM184 170h1v1h-1zM184 171h1v1h-1zM188 175h1v1h-1zM189 176h1v1h-1zM189 177h1v1h-1zM192 182h1v1h-1zM193 183h1v1h-1zM196 188h1v1h-1zM197 189h1v1h-1zM197 190h1v1h-1zM200 195h1v1h-1zM201 196h1v1h-1zM204 201h1v1h-1zM205 202h1v1h-1zM209 207h1v1h-1zM210 208h1v1h-1zM214 213h1v1h-1zM215 214h1v1h-1zM218 219h1v1h-1zM219 220h1v1h-1zM223 225h1v1h-1zM224 226h1v1h-1zM227 231h1v1h-1zM228 232h2v1h-2zM232 237h1v1h-1zM233 238h1v1h-1zM237 243h1v1h-1zM238 244h1v1h-1zM242 248h1v1h-1zM243 249h1v1h-1zM243 250h1v1h-1zM247 254h1v1h-1zM248 255h1v1h-1zM252 260h1v1h-1zM253 261h1v1h-1zM257 266h1v1h-1zM258 267h1v1h-1zM262 272h1v1h-1zM263 273h1v1h-1zM267 277h1v1h-1zM268 278h1v1h-1zM268 279h1v1h-1zM272 283h1v1h-1zM273 284h1v1h-1zM277 289h1v1h-1zM278 290h1v1h-1zM281 295h1v1h-1zM282 296h1v1h-1zM286 301h1v1h-1zM287 302h1v1h-1zM291 307h1v1h-1zM292 308h1v1h-1zM296 313h1v1h-1zM297 314h1v1h-1zM301 318h1v1h-1zM302 319h1v1h-1zM302 320h1v1h-1zM305 324h1v1h-1zM306 325h1v1h-1zM306 326h1v1h-1zM310 330h1v1h-1zM311 331h1v1h-1zM311 332h1v1h-1zM315 336h1v1h-1zM316 337h1v1h-1zM316 338h1v1h-1zM319 343h1v1h-1zM320 344h1v1h-1zM323 349h1v1h-1zM324 350h1v1h-1zM324 351h1v1h-1zM327 356h1v1h-1zM327 357h1v1h-1zM330 362h1v1h-1zM331 363h1v1h-1zM331 364h1v1h-1zM334 369h1v1h-1zM335 370h1v1h-1zM338 375h1v1h-1zM339 376h1v1h-1zM339 377h1v1h-1zM342 382h1v1h-1zM343 383h1v1h-1zM346 389h1v1h-1zM346 390h1v1h-1zM349 395h1v1h-1zM350 396h1v1h-1zM350 397h1v1h-1zM352 402h1v1h-1zM353 403h1v1h-1zM353 404h1v1h-1zM355 409h1v1h-1zM356 410h1v1h-1zM356 411h1v1h-1zM358 416h1v1h-1zM359 417h1v1h-1zM359 418h1v1h-1zM361 423h1v1h-1zM362 424h1v1h-1zM362 425h1v1h-1zM364 430h1v1h-1zM365 431h1v1h-1zM365 432h1v1h-1zM367 437h1v1h-1zM368 438h1v1h-1zM368 439h1v1h-1z"/>
<polyline points="213.2,116.7 187.5,159.8 192.3,170.8 207.5,194.6 209.4,200.3 211.8,221.2 215.5,229.2 225.7,250.7 236.0,271.2 252.3,289.6 270.4,306.4 290.3,335.6 298.5,346.1 314.9,371.9 321.9,385.9 332.4,397.6 334.7,409.3 342.9,428.0 346.8,439.4 349.1,449.9 355.0,460.4 356.1,466.3 367.8,480.3 379.5,494.3 383.0,501.3 383.0,509.5 387.7,516.5 386.5,522.4 394.7,537.6 395.9,542.3 402.9,552.8 404.1,559.8 412.3,566.8 427.5,568.0" fill="none" stroke="#ffffff" stroke-width="1" />
<polyline points="182.2,116.7 155.2,160.4 158.1,167.0 165.7,193.6 167.2,199.3 167.6,220.0 169.4,228.2 176.6,242.5 182.7,260.9 185.8,269.1 199.1,293.7 209.4,307.0 216.5,315.2 221.6,326.4 225.3,332.2 231.9,336.7 247.0,348.5 261.1,363.7 275.1,373.0 286.8,388.2 296.1,399.9 307.8,410.5 321.9,429.2 330.4,440.5 323.4,452.2 322.2,458.1 330.4,469.8 344.4,492.0 349.1,499.0 365.5,508.4 367.8,516.5 374.9,523.6 376.7,530.6 372.5,537.6 374.9,541.1 381.9,547.0 390.1,556.3 398.2,559.8 399.4,564.5 395.9,566.8" fill="none" stroke="#ffffff" stroke-width="1" />
<text x="112.5" y="120.9" fill="#fff" stroke="#fff" stroke-width="0.15" font-size="12.2" text-anchor="end">100</text>
<text x="112.5" y="255.9" fill="#fff" stroke="#fff" stroke-width="0.15" font-size="12.2" text-anchor="end">200</text>
<text x="112.5" y="335.9" fill="#fff" stroke="#fff" stroke-width="0.15" font-size="12.2" text-anchor="end">300</text>
<text x="112.5" y="391.9" fill="#fff" stroke="#fff" stroke-width="0.15" font-size="12.2" text-anchor="end">400</text>
<text x="112.5" y="434.9" fill="#fff" stroke="#fff" stroke-width="0.15" font-size="12.2" text-anchor="end">500</text>
<text x="112.5" y="470.9" fill="#fff" stroke="#fff" stroke-width="0.15" font-size="12.2" text-anchor="end">600</text>
<text x="112.5" y="500.9" fill="#fff" stroke="#fff" stroke-width="0.15" font-size="12.2" text-anchor="end">700</text>
<text x="112.5" y="526.9" fill="#fff" stroke="#fff" stroke-width="0.15" font-size="12.2" text-anchor="end">800</text>
<text x="112.5" y="549.9" fill="#fff" stroke="#fff" stroke-width="0.15" font-size="12.2" text-anchor="end">900</text>
<text x="112.5" y="570.9" fill="#fff" stroke="#fff" stroke-width="0.15" font-size="12.2" text-anchor="end">1000</text>
<text x="112.5" y="579.9" fill="#fff" stroke="#fff" stroke-width="0.15" font-size="12.2" text-anchor="end">1050</text>
<g transform="translate(147.3 113.0) rotate(-45)"><text transform="scale(2.2 1)" x="0" y="0" fill="#fff" stroke="#fff" stroke-width="0.2" font-size="14.5">-</text><text x="14" y="0" fill="#fff" stroke="#fff" stroke-width="0.2" font-size="14.5" letter-spacing="3.4">90</text></g>
<g transform="translate(198.7 113.0) rotate(-45)"><text transform="scale(2.2 1)" x="0" y="0" fill="#fff" stroke="#fff" stroke-width="0.2" font-size="14.5">-</text><text x="14" y="0" fill="#fff" stroke="#fff" stroke-width="0.2" font-size="14.5" letter-spacing="3.4">80</text></g>
<g transform="translate(250.1 113.0) rotate(-45)"><text transform="scale(2.2 1)" x="0" y="0" fill="#fff" stroke="#fff" stroke-width="0.2" font-size="14.5">-</text><text x="14" y="0" fill="#fff" stroke="#fff" stroke-width="0.2" font-size="14.5" letter-spacing="3.4">70</text></g>
<g transform="translate(301.5 113.0) rotate(-45)"><text transform="scale(2.2 1)" x="0" y="0" fill="#fff" stroke="#fff" stroke-width="0.2" font-size="14.5">-</text><text x="14" y="0" fill="#fff" stroke="#fff" stroke-width="0.2" font-size="14.5" letter-spacing="3.4">60</text></g>
<g transform="translate(352.9 113.0) rotate(-45)"><text transform="scale(2.2 1)" x="0" y="0" fill="#fff" stroke="#fff" stroke-width="0.2" font-size="14.5">-</text><text x="14" y="0" fill="#fff" stroke="#fff" stroke-width="0.2" font-size="14.5" letter-spacing="3.4">50</text></g>
<g transform="translate(404.3 113.0) rotate(-45)"><text transform="scale(2.2 1)" x="0" y="0" fill="#fff" stroke="#fff" stroke-width="0.2" font-size="14.5">-</text><text x="14" y="0" fill="#fff" stroke="#fff" stroke-width="0.2" font-size="14.5" letter-spacing="3.4">40</text></g>
<g transform="translate(455.7 113.0) rotate(-45)"><text transform="scale(2.2 1)" x="0" y="0" fill="#fff" stroke="#fff" stroke-width="0.2" font-size="14.5">-</text><text x="14" y="0" fill="#fff" stroke="#fff" stroke-width="0.2" font-size="14.5" letter-spacing="3.4">30</text></g>
<g transform="translate(455.5 184.1) rotate(-45)"><text transform="scale(2.2 1)" x="0" y="0" fill="#fff" stroke="#fff" stroke-width="0.2" font-size="14.5">-</text><text x="14" y="0" fill="#fff" stroke="#fff" stroke-width="0.2" font-size="14.5" letter-spacing="3.4">20</text></g>
<g transform="translate(455.5 254.9) rotate(-45)"><text transform="scale(2.2 1)" x="0" y="0" fill="#fff" stroke="#fff" stroke-width="0.2" font-size="14.5">-</text><text x="14" y="0" fill="#fff" stroke="#fff" stroke-width="0.2" font-size="14.5" letter-spacing="3.4">10</text></g>
<g transform="translate(456.0 325.2) rotate(-45.0)"><text x="0.0" y="0.0" fill="#ffffff" stroke="#ffffff" stroke-width="0.12" font-size="14.5" letter-spacing="3.4" text-anchor="start">0</text></g>
<g transform="translate(456.0 396.0) rotate(-45.0)"><text x="0.0" y="0.0" fill="#ffffff" stroke="#ffffff" stroke-width="0.12" font-size="14.5" letter-spacing="3.4" text-anchor="start">10</text></g>
<g transform="translate(456.0 466.8) rotate(-45.0)"><text x="0.0" y="0.0" fill="#ffffff" stroke="#ffffff" stroke-width="0.12" font-size="14.5" letter-spacing="3.4" text-anchor="start">20</text></g>
<g transform="translate(456.0 537.6) rotate(-45.0)"><text x="0.0" y="0.0" fill="#ffffff" stroke="#ffffff" stroke-width="0.12" font-size="14.5" letter-spacing="3.4" text-anchor="start">30</text></g>
<line x1="83.5" y1="116.0" x2="83.5" y2="576.0" stroke="#00ffff" stroke-width="1" />
<line x1="80.0" y1="568.5" x2="84.0" y2="568.5" stroke="#00ffff" stroke-width="1" />
<text x="77" y="572.5" fill="#00ffff" stroke="#00ffff" stroke-width="0.25" font-size="11" text-anchor="end">0</text>
<line x1="80.0" y1="545.5" x2="84.0" y2="545.5" stroke="#00ffff" stroke-width="1" />
<text x="77" y="549.5" fill="#00ffff" stroke="#00ffff" stroke-width="0.25" font-size="11" text-anchor="end">1</text>
<line x1="80.0" y1="521.5" x2="84.0" y2="521.5" stroke="#00ffff" stroke-width="1" />
<text x="77" y="525.5" fill="#00ffff" stroke="#00ffff" stroke-width="0.25" font-size="11" text-anchor="end">2</text>
<line x1="80.0" y1="496.5" x2="84.0" y2="496.5" stroke="#00ffff" stroke-width="1" />
<text x="77" y="500.5" fill="#00ffff" stroke="#00ffff" stroke-width="0.25" font-size="11" text-anchor="end">3</text>
<line x1="80.0" y1="471.5" x2="84.0" y2="471.5" stroke="#00ffff" stroke-width="1" />
<text x="77" y="475.5" fill="#00ffff" stroke="#00ffff" stroke-width="0.25" font-size="11" text-anchor="end">4</text>
<line x1="80.0" y1="445.5" x2="84.0" y2="445.5" stroke="#00ffff" stroke-width="1" />
<text x="77" y="449.5" fill="#00ffff" stroke="#00ffff" stroke-width="0.25" font-size="11" text-anchor="end">5</text>
<line x1="80.0" y1="419.5" x2="84.0" y2="419.5" stroke="#00ffff" stroke-width="1" />
<text x="77" y="423.5" fill="#00ffff" stroke="#00ffff" stroke-width="0.25" font-size="11" text-anchor="end">6</text>
<line x1="80.0" y1="392.5" x2="84.0" y2="392.5" stroke="#00ffff" stroke-width="1" />
<text x="77" y="396.5" fill="#00ffff" stroke="#00ffff" stroke-width="0.25" font-size="11" text-anchor="end">7</text>
<line x1="80.0" y1="364.5" x2="84.0" y2="364.5" stroke="#00ffff" stroke-width="1" />
<text x="77" y="368.5" fill="#00ffff" stroke="#00ffff" stroke-width="0.25" font-size="11" text-anchor="end">8</text>
<line x1="80.0" y1="335.5" x2="84.0" y2="335.5" stroke="#00ffff" stroke-width="1" />
<text x="77" y="339.5" fill="#00ffff" stroke="#00ffff" stroke-width="0.25" font-size="11" text-anchor="end">9</text>
<line x1="80.0" y1="306.5" x2="84.0" y2="306.5" stroke="#00ffff" stroke-width="1" />
<text x="77" y="310.5" fill="#00ffff" stroke="#00ffff" stroke-width="0.25" font-size="11" text-anchor="end">10</text>
<line x1="80.0" y1="275.5" x2="84.0" y2="275.5" stroke="#00ffff" stroke-width="1" />
<text x="77" y="279.5" fill="#00ffff" stroke="#00ffff" stroke-width="0.25" font-size="11" text-anchor="end">11</text>
<line x1="80.0" y1="245.5" x2="84.0" y2="245.5" stroke="#00ffff" stroke-width="1" />
<text x="77" y="249.5" fill="#00ffff" stroke="#00ffff" stroke-width="0.25" font-size="11" text-anchor="end">12</text>
<line x1="80.0" y1="214.5" x2="84.0" y2="214.5" stroke="#00ffff" stroke-width="1" />
<text x="77" y="218.5" fill="#00ffff" stroke="#00ffff" stroke-width="0.25" font-size="11" text-anchor="end">13</text>
<line x1="80.0" y1="183.5" x2="84.0" y2="183.5" stroke="#00ffff" stroke-width="1" />
<text x="77" y="187.5" fill="#00ffff" stroke="#00ffff" stroke-width="0.25" font-size="11" text-anchor="end">14</text>
<line x1="80.0" y1="152.5" x2="84.0" y2="152.5" stroke="#00ffff" stroke-width="1" />
<text x="77" y="156.5" fill="#00ffff" stroke="#00ffff" stroke-width="0.25" font-size="11" text-anchor="end">15</text>
<line x1="80.0" y1="122.5" x2="84.0" y2="122.5" stroke="#00ffff" stroke-width="1" />
<text x="77" y="126.5" fill="#00ffff" stroke="#00ffff" stroke-width="0.25" font-size="11" text-anchor="end">16</text>
<line x1="532.5" y1="116.0" x2="532.5" y2="576.0" stroke="#00ffff" stroke-width="1" />
<polyline points="532.5,116.4 514.1,129.7" fill="none" stroke="#ffffff" stroke-width="1" />
<polyline points="515.9,128.6 514.3,126.2" fill="none" stroke="#ffffff" stroke-width="1" />
<polyline points="532.5,160.3 512.8,169.5 506.4,164.1" fill="none" stroke="#ffffff" stroke-width="1" />
<polyline points="532.5,195.3 510.7,191.4 508.1,185.0" fill="none" stroke="#ffffff" stroke-width="1" />
<polyline points="532.5,225.0 515.5,210.7 517.6,203.4" fill="none" stroke="#ffffff" stroke-width="1" />
<polyline points="517.6,211.9 519.3,205.5" fill="none" stroke="#ffffff" stroke-width="1" />
<polyline points="532.5,250.7 520.2,235.2" fill="none" stroke="#ffffff" stroke-width="1" />
<polyline points="518.5,234.8 521.5,233.0" fill="none" stroke="#ffffff" stroke-width="1" />
<polyline points="532.5,274.5 513.3,267.1 514.1,263.8" fill="none" stroke="#ffffff" stroke-width="1" />
<polyline points="514.1,265.0 511.0,265.9" fill="none" stroke="#ffffff" stroke-width="1" />
<polyline points="532.5,295.2 513.3,288.3 513.3,284.8" fill="none" stroke="#ffffff" stroke-width="1" />
<polyline points="513.3,286.5 511.0,287.4" fill="none" stroke="#ffffff" stroke-width="1" />
<polyline points="531.5,325.0 531.5,336.0" fill="none" stroke="#ffffff" stroke-width="1" />
<polyline points="532.5,331.1 553.3,336.1 551.3,339.7" fill="none" stroke="#ffffff" stroke-width="1" />
<polyline points="532.5,346.6 553.3,351.2 551.8,354.5" fill="none" stroke="#ffffff" stroke-width="1" />
<polyline points="532.5,361.7 553.3,363.9 551.5,367.0" fill="none" stroke="#ffffff" stroke-width="1" />
<polyline points="532.5,374.3 553.3,376.3 551.5,379.5" fill="none" stroke="#ffffff" stroke-width="1" />
<polyline points="532.5,387.4 553.3,391.8 551.5,395.0" fill="none" stroke="#ffffff" stroke-width="1" />
<polyline points="532.5,399.0 553.3,403.1 551.5,406.0" fill="none" stroke="#ffffff" stroke-width="1" />
<polyline points="532.5,409.9 548.2,395.4 546.2,397.0" fill="none" stroke="#ffffff" stroke-width="1" />
<polyline points="532.5,420.6 552.3,412.5 551.3,416.5" fill="none" stroke="#ffffff" stroke-width="1" />
<polyline points="532.5,430.2 553.3,432.0 551.8,435.0" fill="none" stroke="#ffffff" stroke-width="1" />
<polyline points="532.5,441.3 546.3,452.7 545.3,455.5" fill="none" stroke="#ffffff" stroke-width="1" />
<polyline points="546.3,452.7 548.5,453.5" fill="none" stroke="#ffffff" stroke-width="1" />
<polyline points="532.5,450.6 525.4,468.3 522.3,467.3" fill="none" stroke="#ffffff" stroke-width="1" />
<polyline points="525.4,468.3 524.8,470.5" fill="none" stroke="#ffffff" stroke-width="1" />
<polyline points="532.5,460.0 536.0,468.0 540.5,478.0" fill="none" stroke="#ffffff" stroke-width="1" />
<polyline points="532.5,468.3 548.3,479.8 549.0,483.0" fill="none" stroke="#ffffff" stroke-width="1" />
<polyline points="532.5,475.6 549.4,485.0 550.4,488.5" fill="none" stroke="#ffffff" stroke-width="1" />
<polyline points="532.5,481.9 551.5,489.2 552.0,493.0" fill="none" stroke="#ffffff" stroke-width="1" />
<polyline points="532.5,489.2 552.5,496.5 553.5,503.8" fill="none" stroke="#ffffff" stroke-width="1" />
<polyline points="532.5,496.5 551.5,504.8 552.5,512.0" fill="none" stroke="#ffffff" stroke-width="1" />
<polyline points="532.5,503.8 550.4,513.1 550.8,520.4" fill="none" stroke="#ffffff" stroke-width="1" />
<polyline points="532.5,510.0 550.0,520.4 550.4,526.7" fill="none" stroke="#ffffff" stroke-width="1" />
<polyline points="532.5,517.3 549.4,526.7 551.5,532.9" fill="none" stroke="#ffffff" stroke-width="1" />
<polyline points="532.5,523.5 550.4,532.9 551.5,539.2" fill="none" stroke="#ffffff" stroke-width="1" />
<polyline points="532.5,528.8 551.5,538.1 552.0,543.3" fill="none" stroke="#ffffff" stroke-width="1" />
<polyline points="532.5,535.0 552.0,543.3 552.5,548.5" fill="none" stroke="#ffffff" stroke-width="1" />
<polygon points="533,540.2 552.5,548.5 554,551.7 554,571 551.5,569.5 533,568.5" fill="#fff"/>
<line x1="533.8" y1="554.4" x2="552.0" y2="559.6" stroke="#000" stroke-width="1" />
<text x="469" y="591.2" fill="#fff" font-size="12" textLength="93.5" lengthAdjust="spacingAndGlyphs">WINDS PROFILE</text>
<text x="518.5" y="616" fill="#fff" font-size="10.3">= 50 M/S</text>
<text x="518.5" y="639" fill="#fff" font-size="10.3">= 10 M/S</text>
<text x="518.5" y="662" fill="#fff" font-size="10.3">= 5 M/S</text>
<line x1="493.0" y1="612.5" x2="516.0" y2="612.5" stroke="#ffffff" stroke-width="1" />
<polygon points="493,605 493,613 497.5,613" fill="#fff"/>
<polyline points="490.5,629.0 494.5,635.5 516.0,635.5" fill="none" stroke="#ffffff" stroke-width="1" />
<line x1="493.0" y1="658.5" x2="516.0" y2="658.5" stroke="#ffffff" stroke-width="1" />
<line x1="496.0" y1="658.5" x2="494.5" y2="655.5" stroke="#ffffff" stroke-width="1" />
<line x1="582.0" y1="70.5" x2="684.0" y2="70.5" stroke="#808080" stroke-width="1" />
</svg>
<svg style="position:absolute;left:5px;top:646px;will-change:transform" width="46" height="48" viewBox="0 0 46 48" font-family="Liberation Sans, Arial, sans-serif" shape-rendering="crispEdges"><rect x="0.5" y="0.5" width="45" height="47" fill="#191970" stroke="#8e8e8e"/><title>Z</title><path d="M6.8 12.6 C10 8 15 6.5 20 8.2 C26 10.5 32 13.5 38 9.2 C36 15 28 15 21.3 21.5 C15 28 11 34 6.4 39.8 C9 36 14 35.2 19 36.8 C24 38.5 30 43 38.9 35" fill="none" stroke="#ffff00" stroke-width="2.2" stroke-linejoin="round" shape-rendering="auto"/></svg>
<svg style="position:absolute;left:52px;top:646px;will-change:transform" width="46" height="48" viewBox="0 0 46 48" font-family="Liberation Sans, Arial, sans-serif" shape-rendering="crispEdges"><rect x="0.5" y="0.5" width="45" height="47" fill="#696969" stroke="#8e8e8e"/><defs><pattern id="ck1" width="2" height="2" patternUnits="userSpaceOnUse"><rect width="2" height="2" fill="#696969"/><rect width="1" height="1" fill="#dcdcdc"/><rect x="1" y="1" width="1" height="1" fill="#dcdcdc"/></pattern></defs><circle cx="18.7" cy="10.8" r="7.5" fill="url(#ck1)"/><polygon points="15,16.5 22,16.5 17.2,22 16.2,22" fill="url(#ck1)"/><polyline points="16.8,19.5 16,21.5 11,32" fill="none" stroke="#dcdcdc" stroke-width="1.2"/><polygon points="10.8,30.6 13.1,32.9 10.8,35.2 8.5,32.9" fill="#dcdcdc"/><path d="M8.2 36.2 A2.4 2.2 0 0 0 13.0 36.2" fill="none" stroke="#dcdcdc" stroke-width="1.5" shape-rendering="auto"/><path d="M6.1 37.8 A4.5 3.0 0 0 0 15.1 37.8" fill="none" stroke="#dcdcdc" stroke-width="1.5" shape-rendering="auto"/><path d="M3.9 39.6 A6.7 3.6 0 0 0 17.3 39.6" fill="none" stroke="#dcdcdc" stroke-width="1.5" shape-rendering="auto"/><text transform="translate(22.86 36.80) scale(0.766 1)" fill="#dcdcdc" font-size="16.86" font-weight="bold">K</text></svg>
<svg style="position:absolute;left:99px;top:646px;will-change:transform" width="46" height="48" viewBox="0 0 46 48" font-family="Liberation Sans, Arial, sans-serif" shape-rendering="crispEdges"><rect x="0.5" y="0.5" width="45" height="47" fill="#696969" stroke="#8e8e8e"/><defs><pattern id="ck2" width="2" height="2" patternUnits="userSpaceOnUse"><rect width="2" height="2" fill="#696969"/><rect width="1" height="1" fill="#dcdcdc"/><rect x="1" y="1" width="1" height="1" fill="#dcdcdc"/></pattern></defs><circle cx="18.7" cy="10.8" r="7.5" fill="url(#ck2)"/><polygon points="15,16.5 22,16.5 17.2,22 16.2,22" fill="url(#ck2)"/><polyline points="16.8,19.5 16,21.5 11,32" fill="none" stroke="#dcdcdc" stroke-width="1.2"/><polygon points="10.8,30.6 13.1,32.9 10.8,35.2 8.5,32.9" fill="#dcdcdc"/><path d="M8.2 36.2 A2.4 2.2 0 0 0 13.0 36.2" fill="none" stroke="#dcdcdc" stroke-width="1.5" shape-rendering="auto"/><path d="M6.1 37.8 A4.5 3.0 0 0 0 15.1 37.8" fill="none" stroke="#dcdcdc" stroke-width="1.5" shape-rendering="auto"/><path d="M3.9 39.6 A6.7 3.6 0 0 0 17.3 39.6" fill="none" stroke="#dcdcdc" stroke-width="1.5" shape-rendering="auto"/><text transform="translate(21.53 34.60) scale(0.983 1)" fill="#dcdcdc" font-size="16.28" font-weight="bold">B</text></svg>
<svg style="position:absolute;left:146px;top:646px;will-change:transform" width="46" height="48" viewBox="0 0 46 48" font-family="Liberation Sans, Arial, sans-serif" shape-rendering="crispEdges"><rect x="0.5" y="0.5" width="45" height="47" fill="#696969" stroke="#8e8e8e"/><defs><pattern id="ck3" width="2" height="2" patternUnits="userSpaceOnUse"><rect width="2" height="2" fill="#696969"/><rect width="1" height="1" fill="#dcdcdc"/><rect x="1" y="1" width="1" height="1" fill="#dcdcdc"/></pattern></defs><circle cx="18.7" cy="10.8" r="7.5" fill="url(#ck3)"/><polygon points="15,16.5 22,16.5 17.2,22 16.2,22" fill="url(#ck3)"/><polyline points="16.8,19.5 16,21.5 11,32" fill="none" stroke="#dcdcdc" stroke-width="1.2"/><polygon points="10.8,30.6 13.1,32.9 10.8,35.2 8.5,32.9" fill="#dcdcdc"/><path d="M8.2 36.2 A2.4 2.2 0 0 0 13.0 36.2" fill="none" stroke="#dcdcdc" stroke-width="1.5" shape-rendering="auto"/><path d="M6.1 37.8 A4.5 3.0 0 0 0 15.1 37.8" fill="none" stroke="#dcdcdc" stroke-width="1.5" shape-rendering="auto"/><path d="M3.9 39.6 A6.7 3.6 0 0 0 17.3 39.6" fill="none" stroke="#dcdcdc" stroke-width="1.5" shape-rendering="auto"/><text transform="translate(20.41 38.10) scale(0.810 1)" fill="#dcdcdc" font-size="21.80" font-weight="bold">R</text></svg>
<svg style="position:absolute;left:193px;top:646px;will-change:transform" width="46" height="48" viewBox="0 0 46 48" font-family="Liberation Sans, Arial, sans-serif" shape-rendering="crispEdges"><rect x="0.5" y="0.5" width="45" height="47" fill="#696969" stroke="#8e8e8e"/><defs><pattern id="ck4" width="2" height="2" patternUnits="userSpaceOnUse"><rect width="2" height="2" fill="#696969"/><rect width="1" height="1" fill="#dcdcdc"/><rect x="1" y="1" width="1" height="1" fill="#dcdcdc"/></pattern></defs><circle cx="18.7" cy="10.8" r="7.5" fill="url(#ck4)"/><polygon points="15,16.5 22,16.5 17.2,22 16.2,22" fill="url(#ck4)"/><polyline points="16.8,19.5 16,21.5 11,32" fill="none" stroke="#dcdcdc" stroke-width="1.2"/><polygon points="10.8,30.6 13.1,32.9 10.8,35.2 8.5,32.9" fill="#dcdcdc"/><path d="M8.2 36.2 A2.4 2.2 0 0 0 13.0 36.2" fill="none" stroke="#dcdcdc" stroke-width="1.5" shape-rendering="auto"/><path d="M6.1 37.8 A4.5 3.0 0 0 0 15.1 37.8" fill="none" stroke="#dcdcdc" stroke-width="1.5" shape-rendering="auto"/><path d="M3.9 39.6 A6.7 3.6 0 0 0 17.3 39.6" fill="none" stroke="#dcdcdc" stroke-width="1.5" shape-rendering="auto"/><text transform="translate(19.08 36.00) scale(1.197 1)" fill="#dcdcdc" font-size="17.44" font-weight="bold">M</text></svg>
<svg style="position:absolute;left:240px;top:646px;will-change:transform" width="46" height="48" viewBox="0 0 46 48" font-family="Liberation Sans, Arial, sans-serif" shape-rendering="crispEdges"><rect x="0.5" y="0.5" width="45" height="47" fill="#191970" stroke="#8e8e8e"/><defs><pattern id="ck5" width="2" height="2" patternUnits="userSpaceOnUse"><rect width="2" height="2" fill="#191970"/><rect width="1" height="1" fill="#ffff00"/><rect x="1" y="1" width="1" height="1" fill="#ffff00"/></pattern></defs><circle cx="18.7" cy="10.8" r="7.5" fill="url(#ck5)"/><polygon points="15,16.5 22,16.5 17.2,22 16.2,22" fill="url(#ck5)"/><polyline points="16.8,19.5 16,21.5 11,32" fill="none" stroke="#ffff00" stroke-width="1.2"/><polygon points="10.8,30.6 13.1,32.9 10.8,35.2 8.5,32.9" fill="#ffff00"/><path d="M8.2 36.2 A2.4 2.2 0 0 0 13.0 36.2" fill="none" stroke="#ffff00" stroke-width="1.5" shape-rendering="auto"/><path d="M6.1 37.8 A4.5 3.0 0 0 0 15.1 37.8" fill="none" stroke="#ffff00" stroke-width="1.5" shape-rendering="auto"/><path d="M3.9 39.6 A6.7 3.6 0 0 0 17.3 39.6" fill="none" stroke="#ffff00" stroke-width="1.5" shape-rendering="auto"/><text transform="translate(23.63 31.90) scale(0.889 1)" fill="#ffff00" font-size="16.42" font-weight="bold">L</text></svg>
<svg style="position:absolute;left:287px;top:646px;will-change:transform" width="46" height="48" viewBox="0 0 46 48" font-family="Liberation Sans, Arial, sans-serif" shape-rendering="crispEdges"><rect x="0.5" y="0.5" width="45" height="47" fill="#696969" stroke="#8e8e8e"/><defs><pattern id="ck6" width="2" height="2" patternUnits="userSpaceOnUse"><rect width="2" height="2" fill="#696969"/><rect width="1" height="1" fill="#dcdcdc"/><rect x="1" y="1" width="1" height="1" fill="#dcdcdc"/></pattern></defs><circle cx="18.7" cy="10.8" r="7.5" fill="url(#ck6)"/><polygon points="15,16.5 22,16.5 17.2,22 16.2,22" fill="url(#ck6)"/><polyline points="16.8,19.5 16,21.5 11,32" fill="none" stroke="#dcdcdc" stroke-width="1.2"/><polygon points="10.8,30.6 13.1,32.9 10.8,35.2 8.5,32.9" fill="#dcdcdc"/><path d="M8.2 36.2 A2.4 2.2 0 0 0 13.0 36.2" fill="none" stroke="#dcdcdc" stroke-width="1.5" shape-rendering="auto"/><path d="M6.1 37.8 A4.5 3.0 0 0 0 15.1 37.8" fill="none" stroke="#dcdcdc" stroke-width="1.5" shape-rendering="auto"/><path d="M3.9 39.6 A6.7 3.6 0 0 0 17.3 39.6" fill="none" stroke="#dcdcdc" stroke-width="1.5" shape-rendering="auto"/><text transform="translate(21.73 32.80) scale(1.153 1)" fill="#dcdcdc" font-size="12.06" font-weight="bold">W</text></svg>
<svg style="position:absolute;left:334px;top:646px;will-change:transform" width="46" height="48" viewBox="0 0 46 48" font-family="Liberation Sans, Arial, sans-serif" shape-rendering="crispEdges"><rect x="0.5" y="0.5" width="45" height="47" fill="#696969" stroke="#8e8e8e"/><defs><pattern id="ck7" width="2" height="2" patternUnits="userSpaceOnUse"><rect width="2" height="2" fill="#696969"/><rect width="1" height="1" fill="#dcdcdc"/><rect x="1" y="1" width="1" height="1" fill="#dcdcdc"/></pattern></defs><circle cx="18.7" cy="10.8" r="7.5" fill="url(#ck7)"/><polygon points="15,16.5 22,16.5 17.2,22 16.2,22" fill="url(#ck7)"/><polyline points="16.8,19.5 16,21.5 11,32" fill="none" stroke="#dcdcdc" stroke-width="1.2"/><polygon points="10.8,30.6 13.1,32.9 10.8,35.2 8.5,32.9" fill="#dcdcdc"/><path d="M8.2 36.2 A2.4 2.2 0 0 0 13.0 36.2" fill="none" stroke="#dcdcdc" stroke-width="1.5" shape-rendering="auto"/><path d="M6.1 37.8 A4.5 3.0 0 0 0 15.1 37.8" fill="none" stroke="#dcdcdc" stroke-width="1.5" shape-rendering="auto"/><path d="M3.9 39.6 A6.7 3.6 0 0 0 17.3 39.6" fill="none" stroke="#dcdcdc" stroke-width="1.5" shape-rendering="auto"/><text transform="translate(22.56 36.90) scale(0.820 1)" fill="#dcdcdc" font-size="17.44" font-weight="bold">K</text><text x="35.8" y="42.8" fill="#dcdcdc" font-size="6.3" font-weight="bold">R</text></svg>
<svg style="position:absolute;left:381px;top:646px;will-change:transform" width="46" height="48" viewBox="0 0 46 48" font-family="Liberation Sans, Arial, sans-serif" shape-rendering="crispEdges"><rect x="0.5" y="0.5" width="45" height="47" fill="#696969" stroke="#8e8e8e"/><defs><pattern id="ck8" width="2" height="2" patternUnits="userSpaceOnUse"><rect width="2" height="2" fill="#696969"/><rect width="1" height="1" fill="#dcdcdc"/><rect x="1" y="1" width="1" height="1" fill="#dcdcdc"/></pattern></defs><circle cx="18.7" cy="10.8" r="7.5" fill="url(#ck8)"/><polygon points="15,16.5 22,16.5 17.2,22 16.2,22" fill="url(#ck8)"/><polyline points="16.8,19.5 16,21.5 11,32" fill="none" stroke="#dcdcdc" stroke-width="1.2"/><polygon points="10.8,30.6 13.1,32.9 10.8,35.2 8.5,32.9" fill="#dcdcdc"/><path d="M8.2 36.2 A2.4 2.2 0 0 0 13.0 36.2" fill="none" stroke="#dcdcdc" stroke-width="1.5" shape-rendering="auto"/><path d="M6.1 37.8 A4.5 3.0 0 0 0 15.1 37.8" fill="none" stroke="#dcdcdc" stroke-width="1.5" shape-rendering="auto"/><path d="M3.9 39.6 A6.7 3.6 0 0 0 17.3 39.6" fill="none" stroke="#dcdcdc" stroke-width="1.5" shape-rendering="auto"/><text transform="translate(20.30 38.30) scale(0.817 1)" fill="#dcdcdc" font-size="21.80" font-weight="bold">R</text><text x="36.6" y="42.8" fill="#dcdcdc" font-size="6.3" font-weight="bold">R</text></svg>
</body></html>
